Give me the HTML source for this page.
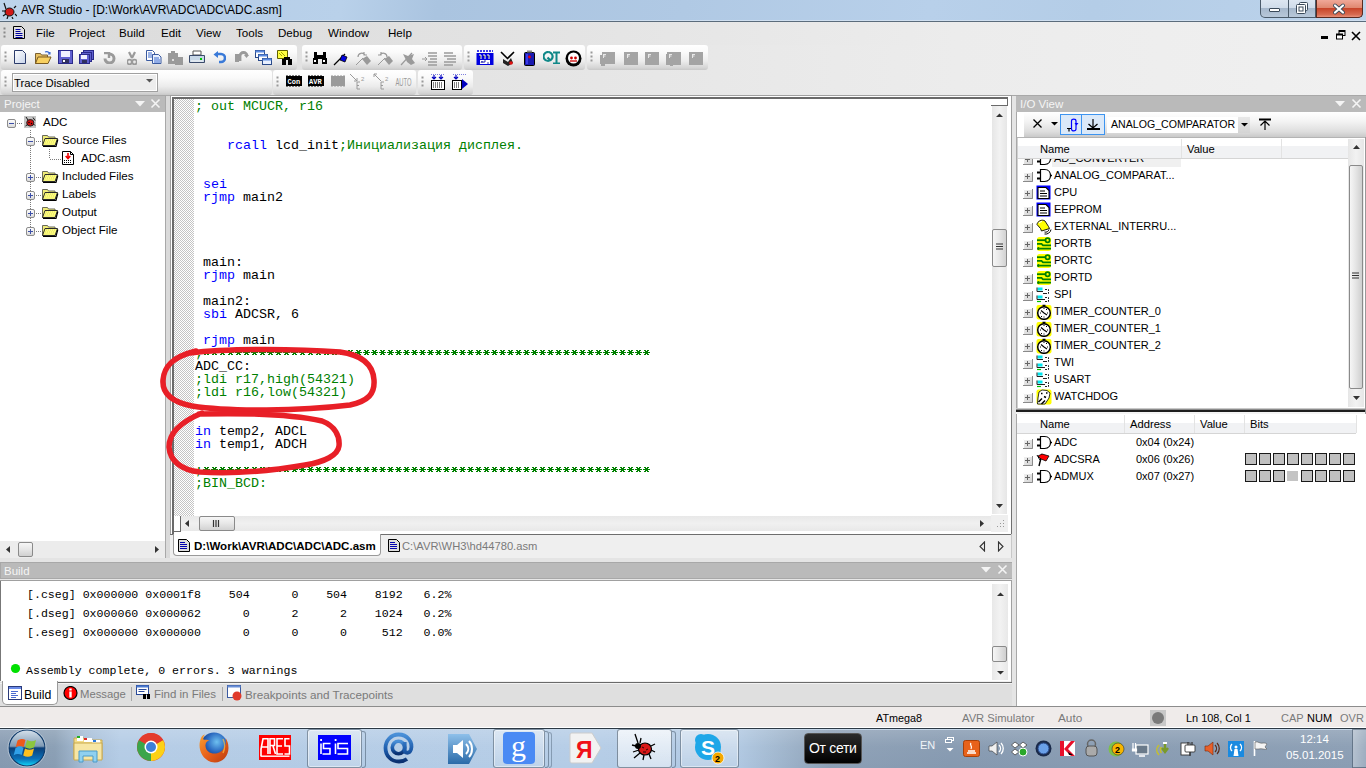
<!DOCTYPE html>
<html><head><meta charset="utf-8"><style>
*{margin:0;padding:0;box-sizing:border-box}
html,body{width:1366px;height:768px;overflow:hidden;background:#e5e5e5;font-family:"Liberation Sans",sans-serif;font-size:12px;color:#000;position:relative}
.a{position:absolute}
.t{position:absolute;white-space:pre;line-height:1}
.code{font-family:"Liberation Mono",monospace;font-size:13.33px;line-height:13px;white-space:pre;position:absolute}
.k{color:#0000ff}.c{color:#008000}
.mono{font-family:"Liberation Mono",monospace}
</style></head><body>
<div class="a" style="left:0px;top:0px;width:1366px;height:21px;background:linear-gradient(100deg,#bdd4eb 0%,#b6cee8 15%,#b9d1ea 25%,#aac4e0 32%,#b0c9e4 50%,#b8d0ea 68%,#b4cde7 80%,#bcd3eb 100%)"></div>
<div class="a" style="left:0px;top:20px;width:1366px;height:1px;background:#cfdff0"></div>
<div class="a" style="left:0px;top:21px;width:1366px;height:1px;background:#5b6c7c"></div>
<div class="t " style="left:21px;top:4px;font-size:12px;color:#000;">AVR Studio - [D:\Work\AVR\ADC\ADC\ADC.asm]</div>
<svg class="a" style="left:1px;top:2px;" width="16" height="17" viewBox="0 0 16 17"><ellipse cx="8.5" cy="10" rx="4.5" ry="4" fill="#d01818" stroke="#111" stroke-width="1"/><path d="M5 7L3 1M1 9h4M2 14l3-2M6 17l1-3M13 6l2-2M14 12l2 2M11 15l1 2" stroke="#111" stroke-width="1.2"/></svg>
<div class="a" style="left:1260px;top:0px;width:103px;height:18px;border:1px solid #4a5a6a;border-top:none;border-radius:0 0 5px 5px;overflow:hidden;background:linear-gradient(#dce6f1 0%,#d0dcea 45%,#a6b8cc 50%,#b8c8da 100%)"></div>
<div class="a" style="left:1316px;top:0px;width:47px;height:18px;background:linear-gradient(#f0a898 0%,#e08870 45%,#c8452a 50%,#d66a50 85%,#e8907a 100%);border:1px solid #5a2a20;border-top:none;border-radius:0 0 5px 0"></div>
<div class="a" style="left:1288px;top:0px;width:1px;height:17px;background:#4a5a6a"></div>
<div class="a" style="left:1315px;top:0px;width:1px;height:17px;background:#4a5a6a"></div>
<div class="a" style="left:1269px;top:8px;width:11px;height:4px;background:#fff;border:1px solid #3a4a5a;border-radius:1px"></div>
<svg class="a" style="left:1295px;top:1px;" width="14" height="14" viewBox="0 0 14 14"><rect x="4.5" y="1.5" width="8" height="8" rx="1" fill="#fff" stroke="#3a4a5a"/><rect x="1.5" y="3.5" width="9" height="9" rx="1" fill="#fff" stroke="#3a4a5a"/><rect x="4" y="6" width="4" height="4" fill="none" stroke="#3a4a5a"/></svg>
<svg class="a" style="left:1331px;top:2px;" width="16" height="13" viewBox="0 0 16 13"><path d="M4 3.5L12 10.5M12 3.5L4 10.5" stroke="#3a4a5a" stroke-width="3.8" stroke-linecap="round"/><path d="M4 3.5L12 10.5M12 3.5L4 10.5" stroke="#fff" stroke-width="2.2" stroke-linecap="round"/></svg>
<div class="a" style="left:0px;top:22px;width:1366px;height:23px;background:linear-gradient(90deg,#dbdbdb 0%,#e2e2e2 35%,#ececec 70%,#f0f0f0 100%)"></div>
<svg class="a" style="left:3px;top:27px;" width="3" height="12" viewBox="0 0 3 12"><rect x="0.5" y="0.5" width="2" height="2" fill="#888"/><rect x="0.5" y="4.5" width="2" height="2" fill="#888"/><rect x="0.5" y="8.5" width="2" height="2" fill="#888"/></svg>
<svg class="a" style="left:13px;top:26px;" width="12" height="13" viewBox="0 0 12 13"><path d="M0.5 0.5h8l3 3v9H0.5Z" fill="#e0e0e0" stroke="#000" stroke-width="1"/><path d="M2.5 3.5h5M2.5 5.5h5M2.5 7.5h7M2.5 9.5h7M2.5 11.5h7" stroke="#0000a0" stroke-width="1"/></svg>
<div class="t " style="left:36px;top:27px;font-size:11.6px;color:#000;">File</div>
<div class="t " style="left:69px;top:27px;font-size:11.6px;color:#000;">Project</div>
<div class="t " style="left:119px;top:27px;font-size:11.6px;color:#000;">Build</div>
<div class="t " style="left:161px;top:27px;font-size:11.6px;color:#000;">Edit</div>
<div class="t " style="left:196px;top:27px;font-size:11.6px;color:#000;">View</div>
<div class="t " style="left:236px;top:27px;font-size:11.6px;color:#000;">Tools</div>
<div class="t " style="left:278px;top:27px;font-size:11.6px;color:#000;">Debug</div>
<div class="t " style="left:328px;top:27px;font-size:11.6px;color:#000;">Window</div>
<div class="t " style="left:388px;top:27px;font-size:11.6px;color:#000;">Help</div>
<div class="a" style="left:1321px;top:36px;width:7px;height:3px;background:#000"></div>
<svg class="a" style="left:1336px;top:30px;" width="10" height="10" viewBox="0 0 10 10"><rect x="3" y="0.5" width="6" height="5" fill="none" stroke="#000"/><rect x="3" y="0.5" width="6" height="1.5" fill="#000"/><rect x="0.5" y="4" width="6" height="5" fill="#fff" stroke="#000"/><rect x="0.5" y="4" width="6" height="1.5" fill="#000"/></svg>
<svg class="a" style="left:1351px;top:31px;" width="10" height="10" viewBox="0 0 10 10"><path d="M1 1L9 9M9 1L1 9" stroke="#000" stroke-width="1.6"/></svg>
<div class="a" style="left:0px;top:45px;width:1366px;height:51px;background:linear-gradient(90deg,#dedede 0%,#e4e4e4 35%,#ececec 70%,#f0f0f0 100%)"></div>
<div class="a" style="left:0px;top:95px;width:1366px;height:1px;background:#a8a8a8"></div>
<div class="a" style="left:1px;top:45px;width:296px;height:25px;background:linear-gradient(#ffffff 0%,#fafafa 30%,#ececec 65%,#d6d6d6 90%,#c8c8c8 100%);border-radius:3px"></div>
<svg class="a" style="left:4px;top:51px;" width="3" height="12" viewBox="0 0 3 12"><rect x="0.5" y="0.5" width="2" height="2" fill="#999"/><rect x="0.5" y="4.5" width="2" height="2" fill="#999"/><rect x="0.5" y="8.5" width="2" height="2" fill="#999"/></svg>
<div class="a" style="left:302px;top:45px;width:160px;height:25px;background:linear-gradient(#ffffff 0%,#fafafa 30%,#ececec 65%,#d6d6d6 90%,#c8c8c8 100%);border-radius:3px"></div>
<svg class="a" style="left:305px;top:51px;" width="3" height="12" viewBox="0 0 3 12"><rect x="0.5" y="0.5" width="2" height="2" fill="#999"/><rect x="0.5" y="4.5" width="2" height="2" fill="#999"/><rect x="0.5" y="8.5" width="2" height="2" fill="#999"/></svg>
<div class="a" style="left:464px;top:45px;width:121px;height:25px;background:linear-gradient(#ffffff 0%,#fafafa 30%,#ececec 65%,#d6d6d6 90%,#c8c8c8 100%);border-radius:3px"></div>
<svg class="a" style="left:467px;top:51px;" width="3" height="12" viewBox="0 0 3 12"><rect x="0.5" y="0.5" width="2" height="2" fill="#999"/><rect x="0.5" y="4.5" width="2" height="2" fill="#999"/><rect x="0.5" y="8.5" width="2" height="2" fill="#999"/></svg>
<div class="a" style="left:587px;top:45px;width:121px;height:25px;background:linear-gradient(#ffffff 0%,#fafafa 30%,#ececec 65%,#d6d6d6 90%,#c8c8c8 100%);border-radius:3px"></div>
<svg class="a" style="left:590px;top:51px;" width="3" height="12" viewBox="0 0 3 12"><rect x="0.5" y="0.5" width="2" height="2" fill="#999"/><rect x="0.5" y="4.5" width="2" height="2" fill="#999"/><rect x="0.5" y="8.5" width="2" height="2" fill="#999"/></svg>
<div class="a" style="left:1px;top:70px;width:271px;height:25px;background:linear-gradient(#ffffff 0%,#fafafa 30%,#ececec 65%,#d6d6d6 90%,#c8c8c8 100%);border-radius:3px"></div>
<svg class="a" style="left:4px;top:76px;" width="3" height="12" viewBox="0 0 3 12"><rect x="0.5" y="0.5" width="2" height="2" fill="#999"/><rect x="0.5" y="4.5" width="2" height="2" fill="#999"/><rect x="0.5" y="8.5" width="2" height="2" fill="#999"/></svg>
<div class="a" style="left:273px;top:70px;width:143px;height:25px;background:linear-gradient(#ffffff 0%,#fafafa 30%,#ececec 65%,#d6d6d6 90%,#c8c8c8 100%);border-radius:3px"></div>
<svg class="a" style="left:276px;top:76px;" width="3" height="12" viewBox="0 0 3 12"><rect x="0.5" y="0.5" width="2" height="2" fill="#999"/><rect x="0.5" y="4.5" width="2" height="2" fill="#999"/><rect x="0.5" y="8.5" width="2" height="2" fill="#999"/></svg>
<div class="a" style="left:418px;top:70px;width:55px;height:25px;background:linear-gradient(#ffffff 0%,#fafafa 30%,#ececec 65%,#d6d6d6 90%,#c8c8c8 100%);border-radius:3px"></div>
<svg class="a" style="left:421px;top:76px;" width="3" height="12" viewBox="0 0 3 12"><rect x="0.5" y="0.5" width="2" height="2" fill="#999"/><rect x="0.5" y="4.5" width="2" height="2" fill="#999"/><rect x="0.5" y="8.5" width="2" height="2" fill="#999"/></svg>
<svg class="a" style="left:14px;top:50px;" width="12" height="14" viewBox="0 0 12 14"><path d="M0.5 0.5h8l3 3v10H0.5Z" fill="url(#pg)" stroke="#2a3a6a"/><defs><linearGradient id="pg" x1="0" y1="0" x2="1" y2="1"><stop offset="0" stop-color="#fff"/><stop offset="1" stop-color="#c8d4ea"/></linearGradient></defs></svg>
<svg class="a" style="left:35px;top:51px;" width="17" height="13" viewBox="0 0 17 13"><path d="M0.5 2.5h5l1 1.5h6v8.5H0.5Z" fill="#e8c060" stroke="#7a6030"/><path d="M0.5 12.5L3 6h13l-3 6.5Z" fill="#f8d060" stroke="#7a5a20"/><path d="M10 1c2-1 4 0 5 2M13 3h2V1" fill="none" stroke="#3a6ad0" stroke-width="1.1"/></svg>
<svg class="a" style="left:58px;top:50px;" width="15" height="14" viewBox="0 0 15 14"><rect x="0.5" y="0.5" width="14" height="13" fill="#6060d0" stroke="#2a2a8a"/><rect x="3" y="1" width="9" height="6" fill="#f0f0ff"/><rect x="4" y="9" width="7" height="4" fill="#303060"/><rect x="5" y="10" width="2" height="2" fill="#fff"/></svg>
<svg class="a" style="left:79px;top:50px;" width="15" height="14" viewBox="0 0 15 14"><rect x="4.5" y="0.5" width="10" height="9" fill="#6060d0" stroke="#2a2a8a"/><rect x="2.5" y="2.5" width="10" height="9" fill="#6060d0" stroke="#2a2a8a"/><rect x="0.5" y="4.5" width="10" height="9" fill="#6060d0" stroke="#2a2a8a"/><rect x="2" y="5" width="6" height="4" fill="#f0f0ff"/><rect x="3" y="10" width="5" height="3" fill="#303060"/></svg>
<svg class="a" style="left:103px;top:52px;" width="13" height="12" viewBox="0 0 13 12"><path d="M6.5 2A4.5 4.5 0 1 1 2 6.5" fill="none" stroke="#9a9a9a" stroke-width="3"/><path d="M1 1h5v5" fill="none" stroke="#9a9a9a" stroke-width="2.4"/></svg>
<svg class="a" style="left:127px;top:51px;" width="10" height="14" viewBox="0 0 10 14"><path d="M2 1l3 6M8 1L5 7" stroke="#9a9a9a" stroke-width="2.2"/><circle cx="2.5" cy="11" r="2.3" fill="none" stroke="#9a9a9a" stroke-width="1.8"/><circle cx="7.5" cy="11" r="2.3" fill="none" stroke="#9a9a9a" stroke-width="1.8"/></svg>
<svg class="a" style="left:146px;top:50px;" width="16" height="14" viewBox="0 0 16 14"><path d="M0.5 0.5h6l2 2v8H0.5Z" fill="#fff" stroke="#3a5aa0"/><path d="M2 3h4M2 5h5M2 7h5" stroke="#3a6ad0"/><path d="M6.5 4.5h6l2.5 2.5v6.5H6.5Z" fill="#e8f0ff" stroke="#3a5aa0"/><path d="M8 8h5M8 10h6M8 12h6" stroke="#3a6ad0"/></svg>
<svg class="a" style="left:167px;top:51px;" width="17" height="14" viewBox="0 0 17 14"><rect x="1" y="2" width="10" height="11" fill="#9a9a9a"/><rect x="8" y="6" width="8" height="8" fill="#9a9a9a"/><rect x="4" y="0" width="4" height="3" fill="#9a9a9a"/><rect x="5" y="8" width="2" height="2" fill="#ddd"/></svg>
<svg class="a" style="left:189px;top:50px;" width="16" height="14" viewBox="0 0 16 14"><path d="M4 1h8v4H4Z" fill="#fff" stroke="#555"/><path d="M0.5 5.5h15v7h-15Z" fill="#c8d8e8" stroke="#3a4a6a"/><rect x="2" y="10" width="12" height="2" fill="#e0e8f0"/><rect x="11" y="8" width="2" height="2" fill="#0c0"/></svg>
<svg class="a" style="left:213px;top:51px;" width="13" height="13" viewBox="0 0 13 13"><path d="M4 3h4a4 4 0 0 1 0 8H6" fill="none" stroke="#3a7ad8" stroke-width="2.6"/><path d="M5 0L0.5 3.5L5 7Z" fill="#3a7ad8"/></svg>
<svg class="a" style="left:234px;top:51px;" width="16" height="12" viewBox="0 0 16 12"><path d="M6 10V5a3.5 3.5 0 0 1 7 0" fill="none" stroke="#9a9a9a" stroke-width="2.8"/><path d="M10 4h5l-2.5 3Z" fill="#9a9a9a"/><rect x="1" y="3" width="4" height="8" fill="#9a9a9a"/></svg>
<svg class="a" style="left:255px;top:50px;" width="17" height="15" viewBox="0 0 17 15"><rect x="0.5" y="0.5" width="9" height="7" fill="#fff" stroke="#2a4a8a"/><rect x="0.5" y="0.5" width="9" height="2" fill="#5a8ae0"/><rect x="3.5" y="4.5" width="9" height="6" fill="#fff" stroke="#2a4a8a"/><rect x="3.5" y="4.5" width="9" height="2" fill="#5a8ae0"/><rect x="7.5" y="8.5" width="9" height="6" fill="#e8f0ff" stroke="#2a4a8a"/><rect x="7.5" y="8.5" width="9" height="2" fill="#5a8ae0"/></svg>
<svg class="a" style="left:277px;top:50px;" width="17" height="15" viewBox="0 0 17 15"><path d="M0.5 0.5h10v8h-10Z" fill="#ffff40" stroke="#606000"/><path d="M2 3l3 3M4 2l4 4" stroke="#a0a000"/><path d="M5 9h4v6H5ZM11 9h4v6h-4Z" fill="#000"/><rect x="7" y="7" width="6" height="3" fill="#000"/></svg>
<svg class="a" style="left:312px;top:50px;" width="16" height="14" viewBox="0 0 16 14"><path d="M1 8h5v6H1ZM10 8h5v6h-5Z" fill="#000"/><path d="M2 2h3v7H2ZM11 2h3v7h-3Z" fill="#000"/><rect x="5" y="5" width="6" height="4" fill="#000"/><rect x="2" y="10" width="2" height="2" fill="#fff"/><rect x="11" y="10" width="2" height="2" fill="#fff"/></svg>
<svg class="a" style="left:333px;top:52px;" width="17" height="14" viewBox="0 0 17 14"><path d="M1 13L12 2" stroke="#000" stroke-width="1.2"/><path d="M9 3l5 2-2 5-5-2Z" fill="#0000e0" stroke="#000" stroke-width="0.8"/></svg>
<svg class="a" style="left:355px;top:51px;" width="17" height="15" viewBox="0 0 17 15"><path d="M3 6C3 2 8 1 10 4M9 1v3h3" fill="none" stroke="#9a9a9a" stroke-width="1.2"/><path d="M1 14L8 7" stroke="#9a9a9a"/><path d="M7 8l5-3 4 5-4 4Z" fill="#9a9a9a"/></svg>
<svg class="a" style="left:377px;top:51px;" width="17" height="15" viewBox="0 0 17 15"><path d="M10 6C10 2 5 1 3 4M4 1v3H1" fill="none" stroke="#9a9a9a" stroke-width="1.2"/><path d="M1 14L8 7" stroke="#9a9a9a"/><path d="M7 8l5-3 4 5-4 4Z" fill="#9a9a9a"/></svg>
<svg class="a" style="left:400px;top:51px;" width="16" height="15" viewBox="0 0 16 15"><path d="M1 14L12 2" stroke="#9a9a9a" stroke-width="1.2"/><path d="M3 3l5 2 6-2-2 5 3 4-4 2-4-3Z" fill="#9a9a9a"/></svg>
<svg class="a" style="left:422px;top:51px;" width="15" height="15" viewBox="0 0 15 15"><path d="M6 2h9M6 5h9M8 8h7M6 11h9M6 14h9" stroke="#9a9a9a" stroke-width="1.4"/><path d="M0 8h5M3 6l2 2-2 2" fill="none" stroke="#9a9a9a"/></svg>
<svg class="a" style="left:444px;top:51px;" width="15" height="15" viewBox="0 0 15 15"><path d="M0 2h9M0 5h12M3 8h9M0 11h12M0 14h9" stroke="#9a9a9a" stroke-width="1.4"/></svg>
<svg class="a" style="left:476px;top:50px;" width="18" height="16" viewBox="0 0 18 16"><rect x="0.5" y="3" width="17" height="12" fill="#0000e0"/><path d="M1 1h16" stroke="#0000e0" stroke-dasharray="2 1" stroke-width="1.5"/><path d="M3 5h2v4M7 5h2v4M11 5h2v4" stroke="#fff"/><rect x="4" y="10" width="10" height="4" fill="#fff"/><path d="M5 13l1-2 1 2M8 13v-2h2M11 13h2" stroke="#0000a0" stroke-width="0.8" fill="none"/></svg>
<svg class="a" style="left:500px;top:50px;" width="15" height="16" viewBox="0 0 15 16"><path d="M1 2L8 9M14 2L7 9" stroke="#000" stroke-width="1.6"/><path d="M3 9l5 3 3-4 2 5-5 3-5-3Z" fill="#222"/><circle cx="11" cy="13" r="1.8" fill="#e01010"/></svg>
<svg class="a" style="left:524px;top:50px;" width="11" height="16" viewBox="0 0 11 16"><rect x="0.5" y="2.5" width="10" height="13" rx="1" fill="#1a1ab0" stroke="#000"/><rect x="3" y="0.5" width="5" height="2" fill="#888"/><circle cx="5.5" cy="7" r="1.4" fill="#e00"/><rect x="2" y="4" width="2" height="10" fill="#3a3ae8"/></svg>
<svg class="a" style="left:543px;top:51px;" width="18" height="13" viewBox="0 0 18 13"><path d="M5 1a4.5 4.5 0 1 0 0.1 0M4.5 6.5l3 3" fill="none" stroke="#108888" stroke-width="2.2"/><path d="M10 1.5h7M13.5 1.5v11M10 12.5h7" stroke="#108888" stroke-width="2"/></svg>
<svg class="a" style="left:565px;top:50px;" width="17" height="17" viewBox="0 0 17 17"><circle cx="8.5" cy="8.5" r="8" fill="#000"/><circle cx="8.5" cy="8" r="5.5" fill="#fff"/><circle cx="6.5" cy="8" r="1.4" fill="#c00"/><circle cx="10.5" cy="8" r="1.4" fill="#c00"/><path d="M5 11h7" stroke="#c00" stroke-width="1.3"/></svg>
<svg class="a" style="left:599px;top:51px;" width="17" height="16" viewBox="0 0 17 16"><path d="M3 1h13v12H6v2H2v-2H1V4h2Z" fill="#a4a4a4"/><path d="M4.5 3v4M4.5 3.5h2.5M4.5 5h2" stroke="#e8e8e8" stroke-width="1"/></svg>
<svg class="a" style="left:623px;top:51px;" width="17" height="16" viewBox="0 0 17 16"><path d="M1 1h14v13H1Z" fill="#a4a4a4"/><path d="M4.5 3v4M4.5 3.5h2.5M4.5 5h2" stroke="#e8e8e8" stroke-width="1"/></svg>
<svg class="a" style="left:644px;top:51px;" width="17" height="16" viewBox="0 0 17 16"><path d="M1 1h14v13H1Z" fill="#a4a4a4"/><path d="M4.5 3v4M4.5 3.5h2.5M4.5 5h2" stroke="#e8e8e8" stroke-width="1"/></svg>
<svg class="a" style="left:665px;top:51px;" width="17" height="16" viewBox="0 0 17 16"><path d="M2 1h14v13H8v1H5v-1H1V3h1Z" fill="#a4a4a4"/><path d="M4.5 3v4M4.5 3.5h2.5M4.5 5h2" stroke="#e8e8e8" stroke-width="1"/></svg>
<svg class="a" style="left:688px;top:51px;" width="17" height="16" viewBox="0 0 17 16"><path d="M1 1h14v13H1Z" fill="#a4a4a4"/><path d="M4.5 3v4M4.5 3.5h2.5M4.5 5h2" stroke="#e8e8e8" stroke-width="1"/></svg>
<div class="a" style="left:12px;top:73px;width:146px;height:19px;background:#ededed;border:1px solid #a0a0a0;box-shadow:inset 0 0 0 1px #fff"></div>
<div class="t " style="left:14px;top:78px;font-size:11.3px;color:#000;">Trace Disabled</div>
<svg class="a" style="left:146px;top:79px;" width="7" height="4" viewBox="0 0 7 4"><path d="M0 0H7L3.5 3.5Z" fill="#555"/></svg>
<svg class="a" style="left:286px;top:74px;" width="16" height="14" viewBox="0 0 16 14"><rect x="0" y="2" width="16" height="10" fill="#000"/><path d="M1 1v1M4 1v1M7 1v1M10 1v1M13 1v1M1 12v1M4 12v1M7 12v1M10 12v1M13 12v1" stroke="#000"/><text x="1.5" y="10" font-family="Liberation Mono" font-weight="bold" font-size="7" fill="#fff">Con</text></svg>
<svg class="a" style="left:308px;top:74px;" width="16" height="14" viewBox="0 0 16 14"><rect x="0" y="2" width="16" height="10" fill="#000"/><path d="M1 1v1M4 1v1M7 1v1M10 1v1M13 1v1M1 12v1M4 12v1M7 12v1M10 12v1M13 12v1" stroke="#000"/><text x="1" y="10" font-family="Liberation Mono" font-weight="bold" font-size="7" fill="#fff">AVR</text></svg>
<svg class="a" style="left:330px;top:74px;" width="16" height="14" viewBox="0 0 16 14"><rect x="1" y="2" width="14" height="10" fill="#9a9a9a"/><path d="M2 1v1M5 1v1M8 1v1M11 1v1M14 1v1M2 12v1M5 12v1M8 12v1M11 12v1M14 12v1" stroke="#9a9a9a"/></svg>
<svg class="a" style="left:349px;top:73px;" width="19" height="17" viewBox="0 0 19 17"><path d="M1 1l7 7M8 8v-3M8 8h-3" fill="none" stroke="#9a9a9a"/><path d="M11 9h-3v7h3M8 12.5h2" fill="none" stroke="#9a9a9a"/><text x="12" y="8" font-size="6" fill="#9a9a9a" font-family="Liberation Sans">2</text></svg>
<svg class="a" style="left:373px;top:73px;" width="19" height="17" viewBox="0 0 19 17"><path d="M8 8L1 1M1 1v3M1 1h3" fill="none" stroke="#9a9a9a"/><path d="M11 9h-3v7h3M8 12.5h2" fill="none" stroke="#9a9a9a"/><text x="12" y="8" font-size="6" fill="#9a9a9a" font-family="Liberation Sans">2</text></svg>
<svg class="a" style="left:430px;top:74px;" width="16" height="16" viewBox="0 0 16 16"><rect x="1.5" y="6.5" width="13" height="9" fill="#fff" stroke="#000"/><path d="M3 9h10M3 11h10M3 13h10" stroke="#000" stroke-dasharray="1 1"/><path d="M4 1v4M2 3l2 2 2-2M11 1v4M9 3l2 2 2-2" fill="none" stroke="#0000c0" stroke-width="1.2"/><path d="M1 0h14" stroke="#0000c0" stroke-dasharray="1 1"/></svg>
<svg class="a" style="left:452px;top:74px;" width="17" height="16" viewBox="0 0 17 16"><rect x="0.5" y="6.5" width="9" height="9" fill="#fff" stroke="#000"/><path d="M2 9h6M2 11h6M2 13h6" stroke="#000" stroke-dasharray="1 1"/><path d="M4 1v4M2 3l2 2 2-2" fill="none" stroke="#0000c0" stroke-width="1.2"/><path d="M10 5l6 5-6 5Z" fill="#0000c0"/><path d="M1 0h14" stroke="#0000c0" stroke-dasharray="1 1"/></svg>
<svg class="a" style="left:395px;top:76px;" width="17" height="11" viewBox="0 0 17 11"><text x="0.5" y="9.5" font-family="Liberation Sans" font-size="10.5" textLength="16" lengthAdjust="spacingAndGlyphs" fill="#9a9a9a">AUTO</text></svg>
<div class="a" style="left:0px;top:96px;width:166px;height:462px;background:#fff"></div>
<div class="a" style="left:0px;top:96px;width:166px;height:16px;background:#bababa"></div>
<div class="t " style="left:4px;top:99px;font-size:11.5px;color:#f5f5f5;">Project</div>
<svg class="a" style="left:135px;top:101px;" width="10" height="6" viewBox="0 0 10 6"><path d="M0 0H10L5 5.5Z" fill="#f4f4f4"/></svg>
<svg class="a" style="left:150px;top:98px;" width="11" height="11" viewBox="0 0 11 11"><path d="M1.5 1.5L9.5 9.5M9.5 1.5L1.5 9.5" stroke="#f4f4f4" stroke-width="1.6"/></svg>
<svg class="a" style="left:7px;top:119px;" width="9" height="9" viewBox="0 0 9 9"><defs><linearGradient id="pmg" x1="0" y1="0" x2="0" y2="1"><stop offset="0" stop-color="#fff"/><stop offset="1" stop-color="#d8d8d8"/></linearGradient></defs><rect x="0.5" y="0.5" width="8" height="8" rx="1.5" fill="url(#pmg)" stroke="#8c8c8c"/><path d="M2 4.5h5" stroke="#3c4fa8" stroke-width="1"/></svg>
<div class="a" style="left:17px;top:123px;width:6px;height:1px;background:repeating-linear-gradient(90deg,#7a7a7a 0 1px,transparent 1px 2px)"></div>
<svg class="a" style="left:24px;top:116px;" width="12" height="12" viewBox="0 0 12 12"><rect width="12" height="12" fill="#c4c4c4"/><ellipse cx="6.3" cy="6.8" rx="3.6" ry="3.3" fill="#d01010" stroke="#222" stroke-width="1"/><path d="M2 1L4 4M9 1.5L11 4.5M1.5 10L3.5 8.5M11 9.5L9.5 8" stroke="#111" stroke-width="1"/><circle cx="5" cy="6.5" r="0.7" fill="#000"/><circle cx="7.5" cy="7.5" r="0.7" fill="#000"/></svg>
<div class="t " style="left:43px;top:116px;font-size:11.6px;color:#000;">ADC</div>
<div class="a" style="left:30px;top:130px;width:1px;height:102px;background:repeating-linear-gradient(#7a7a7a 0 1px,transparent 1px 2px)"></div>
<svg class="a" style="left:26px;top:137px;" width="9" height="9" viewBox="0 0 9 9"><defs><linearGradient id="pmg" x1="0" y1="0" x2="0" y2="1"><stop offset="0" stop-color="#fff"/><stop offset="1" stop-color="#d8d8d8"/></linearGradient></defs><rect x="0.5" y="0.5" width="8" height="8" rx="1.5" fill="url(#pmg)" stroke="#8c8c8c"/><path d="M2 4.5h5" stroke="#3c4fa8" stroke-width="1"/></svg>
<div class="a" style="left:36px;top:141px;width:5px;height:1px;background:repeating-linear-gradient(90deg,#7a7a7a 0 1px,transparent 1px 2px)"></div>
<svg class="a" style="left:41px;top:133px;" width="18" height="15" viewBox="0 0 18 15"><path d="M1.5 2.5h5l1 1.5h6.5v8.5H1.5Z" fill="#f0ec78" stroke="#6b6b5a"/><path d="M1.5 12.5L4 5.5H16.5L14 12.5Z" fill="#ffff7a" stroke="#2a2a2a"/><path d="M2 13.5H15L16.8 6.5" fill="none" stroke="#000" stroke-width="1.2"/><path d="M5 7h9M4 9h9M3.5 11h9" stroke="#d8d470" stroke-width="1" stroke-dasharray="1 1"/></svg>
<div class="t " style="left:62px;top:134px;font-size:11.6px;color:#000;">Source Files</div>
<svg class="a" style="left:26px;top:173px;" width="9" height="9" viewBox="0 0 9 9"><defs><linearGradient id="pmg" x1="0" y1="0" x2="0" y2="1"><stop offset="0" stop-color="#fff"/><stop offset="1" stop-color="#d8d8d8"/></linearGradient></defs><rect x="0.5" y="0.5" width="8" height="8" rx="1.5" fill="url(#pmg)" stroke="#8c8c8c"/><path d="M2 4.5h5" stroke="#3c4fa8" stroke-width="1"/><path d="M4.5 2v5" stroke="#3c4fa8" stroke-width="1"/></svg>
<div class="a" style="left:36px;top:177px;width:5px;height:1px;background:repeating-linear-gradient(90deg,#7a7a7a 0 1px,transparent 1px 2px)"></div>
<svg class="a" style="left:41px;top:169px;" width="18" height="15" viewBox="0 0 18 15"><path d="M1.5 2.5h5l1 1.5h6.5v8.5H1.5Z" fill="#f0ec78" stroke="#6b6b5a"/><path d="M1.5 12.5L4 5.5H16.5L14 12.5Z" fill="#ffff7a" stroke="#2a2a2a"/><path d="M2 13.5H15L16.8 6.5" fill="none" stroke="#000" stroke-width="1.2"/><path d="M5 7h9M4 9h9M3.5 11h9" stroke="#d8d470" stroke-width="1" stroke-dasharray="1 1"/></svg>
<div class="t " style="left:62px;top:170px;font-size:11.6px;color:#000;">Included Files</div>
<svg class="a" style="left:26px;top:191px;" width="9" height="9" viewBox="0 0 9 9"><defs><linearGradient id="pmg" x1="0" y1="0" x2="0" y2="1"><stop offset="0" stop-color="#fff"/><stop offset="1" stop-color="#d8d8d8"/></linearGradient></defs><rect x="0.5" y="0.5" width="8" height="8" rx="1.5" fill="url(#pmg)" stroke="#8c8c8c"/><path d="M2 4.5h5" stroke="#3c4fa8" stroke-width="1"/><path d="M4.5 2v5" stroke="#3c4fa8" stroke-width="1"/></svg>
<div class="a" style="left:36px;top:195px;width:5px;height:1px;background:repeating-linear-gradient(90deg,#7a7a7a 0 1px,transparent 1px 2px)"></div>
<svg class="a" style="left:41px;top:187px;" width="18" height="15" viewBox="0 0 18 15"><path d="M1.5 2.5h5l1 1.5h6.5v8.5H1.5Z" fill="#f0ec78" stroke="#6b6b5a"/><path d="M1.5 12.5L4 5.5H16.5L14 12.5Z" fill="#ffff7a" stroke="#2a2a2a"/><path d="M2 13.5H15L16.8 6.5" fill="none" stroke="#000" stroke-width="1.2"/><path d="M5 7h9M4 9h9M3.5 11h9" stroke="#d8d470" stroke-width="1" stroke-dasharray="1 1"/></svg>
<div class="t " style="left:62px;top:188px;font-size:11.6px;color:#000;">Labels</div>
<svg class="a" style="left:26px;top:209px;" width="9" height="9" viewBox="0 0 9 9"><defs><linearGradient id="pmg" x1="0" y1="0" x2="0" y2="1"><stop offset="0" stop-color="#fff"/><stop offset="1" stop-color="#d8d8d8"/></linearGradient></defs><rect x="0.5" y="0.5" width="8" height="8" rx="1.5" fill="url(#pmg)" stroke="#8c8c8c"/><path d="M2 4.5h5" stroke="#3c4fa8" stroke-width="1"/><path d="M4.5 2v5" stroke="#3c4fa8" stroke-width="1"/></svg>
<div class="a" style="left:36px;top:213px;width:5px;height:1px;background:repeating-linear-gradient(90deg,#7a7a7a 0 1px,transparent 1px 2px)"></div>
<svg class="a" style="left:41px;top:205px;" width="18" height="15" viewBox="0 0 18 15"><path d="M1.5 2.5h5l1 1.5h6.5v8.5H1.5Z" fill="#f0ec78" stroke="#6b6b5a"/><path d="M1.5 12.5L4 5.5H16.5L14 12.5Z" fill="#ffff7a" stroke="#2a2a2a"/><path d="M2 13.5H15L16.8 6.5" fill="none" stroke="#000" stroke-width="1.2"/><path d="M5 7h9M4 9h9M3.5 11h9" stroke="#d8d470" stroke-width="1" stroke-dasharray="1 1"/></svg>
<div class="t " style="left:62px;top:206px;font-size:11.6px;color:#000;">Output</div>
<svg class="a" style="left:26px;top:227px;" width="9" height="9" viewBox="0 0 9 9"><defs><linearGradient id="pmg" x1="0" y1="0" x2="0" y2="1"><stop offset="0" stop-color="#fff"/><stop offset="1" stop-color="#d8d8d8"/></linearGradient></defs><rect x="0.5" y="0.5" width="8" height="8" rx="1.5" fill="url(#pmg)" stroke="#8c8c8c"/><path d="M2 4.5h5" stroke="#3c4fa8" stroke-width="1"/><path d="M4.5 2v5" stroke="#3c4fa8" stroke-width="1"/></svg>
<div class="a" style="left:36px;top:231px;width:5px;height:1px;background:repeating-linear-gradient(90deg,#7a7a7a 0 1px,transparent 1px 2px)"></div>
<svg class="a" style="left:41px;top:223px;" width="18" height="15" viewBox="0 0 18 15"><path d="M1.5 2.5h5l1 1.5h6.5v8.5H1.5Z" fill="#f0ec78" stroke="#6b6b5a"/><path d="M1.5 12.5L4 5.5H16.5L14 12.5Z" fill="#ffff7a" stroke="#2a2a2a"/><path d="M2 13.5H15L16.8 6.5" fill="none" stroke="#000" stroke-width="1.2"/><path d="M5 7h9M4 9h9M3.5 11h9" stroke="#d8d470" stroke-width="1" stroke-dasharray="1 1"/></svg>
<div class="t " style="left:62px;top:224px;font-size:11.6px;color:#000;">Object File</div>
<div class="a" style="left:49px;top:149px;width:1px;height:10px;background:repeating-linear-gradient(#7a7a7a 0 1px,transparent 1px 2px)"></div>
<div class="a" style="left:50px;top:159px;width:11px;height:1px;background:repeating-linear-gradient(90deg,#7a7a7a 0 1px,transparent 1px 2px)"></div>
<svg class="a" style="left:61px;top:151px;" width="14" height="14" viewBox="0 0 14 14"><path d="M1.5 0.5h8l3 3v10H1.5Z" fill="#fff" stroke="#000"/><path d="M9.5 0.5v3h3" fill="none" stroke="#000"/><path d="M7 2v5M4.7 5L7 7.5L9.3 5" stroke="#e00" stroke-width="1.6" fill="none"/><g fill="#000"><rect x="3" y="9" width="1" height="1"/><rect x="5" y="9" width="1" height="1"/><rect x="7" y="9" width="1" height="1"/><rect x="9" y="9" width="1" height="1"/><rect x="3" y="11" width="1" height="1"/><rect x="5" y="11" width="1" height="1"/><rect x="7" y="11" width="1" height="1"/><rect x="9" y="11" width="1" height="1"/></g></svg>
<div class="t " style="left:81px;top:152px;font-size:11.6px;color:#000;">ADC.asm</div>
<div class="a" style="left:0px;top:541px;width:166px;height:17px;background:#ececec"></div>
<svg class="a" style="left:5px;top:545px;" width="6" height="9" viewBox="0 0 6 9"><path d="M5 1L1 4.5L5 8Z" fill="#333"/></svg>
<svg class="a" style="left:154px;top:545px;" width="6" height="9" viewBox="0 0 6 9"><path d="M1 1L5 4.5L1 8Z" fill="#333"/></svg>
<div class="a" style="left:18px;top:542px;width:15px;height:15px;background:linear-gradient(#f6f6f6,#e6e6e6 50%,#d0d0d0);border:1px solid #8a8a8a;border-radius:2px"></div>
<div class="a" style="left:166px;top:96px;width:846px;height:466px;background:#ebebeb"></div>
<div class="a" style="left:166px;top:96px;width:4px;height:462px;background:#dadada"></div>
<div class="a" style="left:165px;top:96px;width:1px;height:462px;background:#a8a8a8"></div>
<div class="a" style="left:170px;top:95px;width:842px;height:440px;background:#fff"></div>
<div class="a" style="left:170px;top:95px;width:842px;height:1px;background:#a0a0a0"></div>
<div class="a" style="left:170px;top:95px;width:1px;height:440px;background:#a0a0a0"></div>
<div class="a" style="left:172px;top:97px;width:836px;height:2px;background:#6a6a6a"></div>
<div class="a" style="left:172px;top:97px;width:2px;height:437px;background:#6a6a6a"></div>
<div class="a" style="left:1011px;top:95px;width:1px;height:440px;background:linear-gradient(#a0a0a0,#6e6e6e)"></div>
<div class="a" style="left:170px;top:534px;width:842px;height:1px;background:#6e6e6e"></div>
<div class="a" style="left:174px;top:99px;width:20px;height:417px;background:repeating-conic-gradient(#c4c4c4 0 25%,#ffffff 0 50%) 0 0/2px 2px"></div>
<div class="code" style="left:195px;top:100px"><span class="c">; out MCUCR, r16</span>


    <span class="k">rcall</span> lcd_init<span class="c">;Инициализация дисплея.</span>


 <span class="k">sei</span>
 <span class="k">rjmp</span> main2




 main:
 <span class="k">rjmp</span> main

 main2:
 <span class="k">sbi</span> ADCSR, 6

 <span class="k">rjmp</span> main
<span class="c">;</span>
ADC_CC:
<span class="c">;ldi r17,high(54321)</span>
<span class="c">;ldi r16,low(54321)</span>


<span class="k">in</span> temp2, ADCL
<span class="k">in</span> temp1, ADCH

<span class="c">;</span>
<span class="c">;BIN_BCD:</span></div>
<svg class="a" style="left:203px;top:350px;shape-rendering:crispEdges" width="448" height="5" viewBox="0 0 448 5"><defs><pattern id="ast19" x="0" y="0" width="8" height="5" patternUnits="userSpaceOnUse"><g fill="#008000"><rect x="1" y="0" width="2" height="1"/><rect x="4" y="0" width="2" height="1"/><rect x="2" y="1" width="3" height="1"/><rect x="0" y="2" width="7" height="1"/><rect x="2" y="3" width="3" height="1"/><rect x="1" y="4" width="2" height="1"/><rect x="4" y="4" width="2" height="1"/></g></pattern></defs><rect x="0" y="0" width="448" height="5" fill="url(#ast19)"/></svg>
<svg class="a" style="left:203px;top:467px;shape-rendering:crispEdges" width="448" height="5" viewBox="0 0 448 5"><defs><pattern id="ast28" x="0" y="0" width="8" height="5" patternUnits="userSpaceOnUse"><g fill="#008000"><rect x="1" y="0" width="2" height="1"/><rect x="4" y="0" width="2" height="1"/><rect x="2" y="1" width="3" height="1"/><rect x="0" y="2" width="7" height="1"/><rect x="2" y="3" width="3" height="1"/><rect x="1" y="4" width="2" height="1"/><rect x="4" y="4" width="2" height="1"/></g></pattern></defs><rect x="0" y="0" width="448" height="5" fill="url(#ast28)"/></svg>
<svg class="a" style="left:0px;top:0px;pointer-events:none" width="1366" height="768" viewBox="0 0 1366 768"><g fill="none" stroke="#e81f27" stroke-width="5.5" stroke-linecap="round" stroke-linejoin="round"><path d="M190 353 C230 348,300 349,340 352 C362 355,373 364,374 380 C375 394,368 401,350 405 C300 411,230 412,192 406 C172 402,162 393,163 380 C164 367,172 357,196 351"/><path d="M199 414 C240 413,290 414,322 421 C335 426,340 436,339 446 C338 455,325 462,305 465 C270 471,230 474,200 472 C180 470,170 460,169 447 C169 435,178 423,202 413"/></g></svg>
<div class="a" style="left:991px;top:99px;width:17px;height:7px;background:#fff;border-bottom:1px solid #6a6a6a;border-right:1px solid #6a6a6a"></div>
<div class="a" style="left:992px;top:106px;width:15px;height:408px;background:linear-gradient(90deg,#e6e6e6,#f2f2f2 50%,#e6e6e6)"></div>
<svg class="a" style="left:995px;top:112px;" width="9" height="6" viewBox="0 0 9 6"><path d="M1 5 L4.5 1.5 L8 5 Z" fill="#333"/></svg>
<svg class="a" style="left:995px;top:503px;" width="9" height="6" viewBox="0 0 9 6"><path d="M1 1 L4.5 5 L8 1 Z" fill="#333"/></svg>
<div class="a" style="left:992px;top:229px;width:15px;height:38px;background:linear-gradient(90deg,#f6f6f6,#e9e9e9 45%,#d2d2d2 100%);border:1px solid #8a8a8a;border-radius:2px"></div>
<svg class="a" style="left:995px;top:243px;" width="9" height="8" viewBox="0 0 9 8"><path d="M1 1h7M1 3.5h7M1 6h7" stroke="#333" stroke-width="1.2"/></svg>
<div class="a" style="left:174px;top:516px;width:7px;height:16px;background:#fff;border-right:1px solid #6a6a6a;border-bottom:1px solid #6a6a6a"></div>
<div class="a" style="left:181px;top:516px;width:810px;height:15px;background:linear-gradient(#e8e8e8,#f0f0f0 50%,#e8e8e8)"></div>
<svg class="a" style="left:184px;top:519px;" width="6" height="9" viewBox="0 0 6 9"><path d="M5 1 L1 4.5 L5 8 Z" fill="#333"/></svg>
<svg class="a" style="left:979px;top:519px;" width="6" height="9" viewBox="0 0 6 9"><path d="M1 1 L5 4.5 L1 8 Z" fill="#333"/></svg>
<div class="a" style="left:199px;top:516px;width:36px;height:15px;background:linear-gradient(#f6f6f6,#e9e9e9 45%,#d2d2d2 100%);border:1px solid #8a8a8a;border-radius:2px"></div>
<svg class="a" style="left:212px;top:519px;" width="9" height="9" viewBox="0 0 9 9"><path d="M1.5 1v7M4 1v7M6.5 1v7" stroke="#333" stroke-width="1.2"/></svg>
<div class="a" style="left:991px;top:515px;width:17px;height:17px;background:#efefef"></div>
<svg class="a" style="left:996px;top:519px;" width="10" height="10" viewBox="0 0 10 10"><g fill="#999"><rect x="7" y="1" width="1" height="1"/><rect x="4" y="4" width="1" height="1"/><rect x="7" y="4" width="1" height="1"/><rect x="1" y="7" width="1" height="1"/><rect x="4" y="7" width="1" height="1"/><rect x="7" y="7" width="1" height="1"/></g></svg>
<div class="a" style="left:170px;top:535px;width:842px;height:23px;background:#ececec"></div>
<div class="a" style="left:1016px;top:96px;width:350px;height:612px;background:#ececec"></div>
<div class="a" style="left:1016px;top:96px;width:350px;height:16px;background:#bababa"></div>
<div class="t " style="left:1020px;top:99px;font-size:11.5px;color:#f5f5f5;">I/O View</div>
<svg class="a" style="left:1335px;top:101px;" width="10" height="6" viewBox="0 0 10 6"><path d="M0 0H10L5 5.5Z" fill="#f4f4f4"/></svg>
<svg class="a" style="left:1351px;top:98px;" width="11" height="11" viewBox="0 0 11 11"><path d="M1.5 1.5L9.5 9.5M9.5 1.5L1.5 9.5" stroke="#f4f4f4" stroke-width="1.6"/></svg>
<div class="a" style="left:1016px;top:112px;width:1px;height:596px;background:#a8a8a8"></div>
<div class="a" style="left:1017px;top:112px;width:349px;height:26px;background:#fff"></div>
<div class="a" style="left:1024px;top:112px;width:342px;height:26px;background:linear-gradient(#ffffff 0%,#f4f4f4 35%,#dedede 75%,#c6c6c6 100%)"></div>
<svg class="a" style="left:1032px;top:118px;" width="11" height="11" viewBox="0 0 11 11"><path d="M1.5 1.5L9.5 9.5M9.5 1.5L1.5 9.5" stroke="#000" stroke-width="1.3"/></svg>
<svg class="a" style="left:1051px;top:122px;" width="7" height="4" viewBox="0 0 7 4"><path d="M0 0H7L3.5 3.5Z" fill="#000"/></svg>
<div class="a" style="left:1060px;top:114px;width:22px;height:21px;background:#dbe9f9;border:1px solid #3d94f0"></div>
<div class="a" style="left:1081px;top:114px;width:24px;height:21px;background:#dbe9f9;border:1px solid #3d94f0"></div>
<svg class="a" style="left:1064px;top:117px;" width="15" height="16" viewBox="0 0 15 16"><path d="M7.5 4C7.5 1.5 12 1.5 12 4V12C12 14.5 7.5 14.5 7.5 12Z" fill="none" stroke="#0000ff" stroke-width="1.2"/><path d="M10.5 6H14.5L12.5 8.5Z" fill="#0000ff"/><path d="M3 11.5h4M5 11.5v3" stroke="#000" stroke-width="1.2"/></svg>
<svg class="a" style="left:1085px;top:117px;" width="16" height="16" viewBox="0 0 16 16"><path d="M8 2V11M3.5 7L8 11L12.5 7" fill="none" stroke="#000" stroke-width="1.2"/><path d="M2 12h13" stroke="#000" stroke-width="2"/></svg>
<div class="a" style="left:1107px;top:117px;width:143px;height:16px;background:#fff"></div>
<div class="t " style="left:1111px;top:119px;font-size:10.6px;color:#000;">ANALOG_COMPARATOR</div>
<div class="a" style="left:1238px;top:117px;width:12px;height:16px;background:linear-gradient(#e8e8e8,#d4d4d4)"></div>
<svg class="a" style="left:1241px;top:123px;" width="7" height="4" viewBox="0 0 7 4"><path d="M0 0H7L3.5 3.5Z" fill="#000"/></svg>
<svg class="a" style="left:1258px;top:118px;" width="14" height="13" viewBox="0 0 14 13"><path d="M1 1.5h12" stroke="#000" stroke-width="2"/><path d="M7 3V12M2.5 7.5L7 3L11.5 7.5" fill="none" stroke="#000" stroke-width="1.2"/></svg>
<div class="a" style="left:1017px;top:137px;width:349px;height:1px;background:#b4b4b4"></div>
<div class="a" style="left:1017px;top:138px;width:349px;height:270px;background:#fff"></div>
<div class="a" style="left:1017px;top:138px;width:331px;height:20px;background:linear-gradient(#fff 0 8px,#f1f2f4 8px)"></div>
<div class="a" style="left:1017px;top:158px;width:331px;height:1px;background:#d5d5d5"></div>
<div class="a" style="left:1181px;top:139px;width:1px;height:19px;background:#e3e3e3"></div>
<div class="a" style="left:1281px;top:139px;width:1px;height:19px;background:#e3e3e3"></div>
<div class="t " style="left:1040px;top:144px;font-size:11.2px;color:#000;">Name</div>
<div class="t " style="left:1187px;top:144px;font-size:11.2px;color:#000;">Value</div>
<div class="a" style="left:1348px;top:139px;width:16px;height:268px;background:linear-gradient(90deg,#e6e6e6,#f2f2f2 50%,#e6e6e6)"></div>
<svg class="a" style="left:1352px;top:144px;" width="9" height="6" viewBox="0 0 9 6"><path d="M1 5L4.5 1L8 5Z" fill="#333"/></svg>
<svg class="a" style="left:1352px;top:395px;" width="9" height="6" viewBox="0 0 9 6"><path d="M1 1L4.5 5L8 1Z" fill="#333"/></svg>
<div class="a" style="left:1349px;top:165px;width:14px;height:224px;background:linear-gradient(90deg,#f6f6f6,#e6e6e6 45%,#cfcfcf);border:1px solid #8a8a8a;border-radius:2px"></div>
<svg class="a" style="left:1351px;top:272px;" width="9" height="8" viewBox="0 0 9 8"><path d="M1 1h7M1 3.5h7M1 6h7" stroke="#333" stroke-width="1.2"/></svg>
<div class="a" style="left:1017px;top:159px;width:331px;height:248px;overflow:hidden">
<div class="a" style="left:35px;top:-8px;width:129px;height:16px;background:#f0f0f0"></div>
<svg class="a" style="left:6px;top:-4px;" width="10" height="10" viewBox="0 0 10 10"><defs><linearGradient id="iob" x1="0" y1="0" x2="1" y2="1"><stop offset="0" stop-color="#f4f4f4"/><stop offset="1" stop-color="#d0d0d0"/></linearGradient></defs><rect x="0" y="0" width="10" height="10" fill="url(#iob)"/><path d="M0 9.5H9.5V0" fill="none" stroke="#8a8a8a"/><path d="M0.5 9V0.5H9" fill="none" stroke="#fff"/><path d="M2 4.5h5M4.5 2v5" stroke="#666" stroke-width="1"/></svg>
<svg class="a" style="left:19px;top:-8px;" width="16" height="16" viewBox="0 0 16 16"><path d="M4.5 1.5H8.5C13 1.5 14.5 5 14.5 7.5S13 13.5 8.5 13.5H4.5Z" fill="#fff" stroke="#000" stroke-width="1.2"/><path d="M1 4.5h3.5M1 10.5h3.5" stroke="#000" stroke-width="1.8"/><path d="M14.5 7.5h1.5" stroke="#000" stroke-width="1.5"/></svg>
<div class="t " style="left:37px;top:-6px;font-size:11px;color:#000;">AD_CONVERTER</div>
<svg class="a" style="left:6px;top:13px;" width="10" height="10" viewBox="0 0 10 10"><defs><linearGradient id="iob" x1="0" y1="0" x2="1" y2="1"><stop offset="0" stop-color="#f4f4f4"/><stop offset="1" stop-color="#d0d0d0"/></linearGradient></defs><rect x="0" y="0" width="10" height="10" fill="url(#iob)"/><path d="M0 9.5H9.5V0" fill="none" stroke="#8a8a8a"/><path d="M0.5 9V0.5H9" fill="none" stroke="#fff"/><path d="M2 4.5h5M4.5 2v5" stroke="#666" stroke-width="1"/></svg>
<svg class="a" style="left:19px;top:9px;" width="16" height="16" viewBox="0 0 16 16"><path d="M4.5 1.5H8.5C13 1.5 14.5 5 14.5 7.5S13 13.5 8.5 13.5H4.5Z" fill="#fff" stroke="#000" stroke-width="1.2"/><path d="M1 4.5h3.5M1 10.5h3.5" stroke="#000" stroke-width="1.8"/><path d="M14.5 7.5h1.5" stroke="#000" stroke-width="1.5"/></svg>
<div class="t " style="left:37px;top:11px;font-size:11px;color:#000;">ANALOG_COMPARAT...</div>
<svg class="a" style="left:6px;top:30px;" width="10" height="10" viewBox="0 0 10 10"><defs><linearGradient id="iob" x1="0" y1="0" x2="1" y2="1"><stop offset="0" stop-color="#f4f4f4"/><stop offset="1" stop-color="#d0d0d0"/></linearGradient></defs><rect x="0" y="0" width="10" height="10" fill="url(#iob)"/><path d="M0 9.5H9.5V0" fill="none" stroke="#8a8a8a"/><path d="M0.5 9V0.5H9" fill="none" stroke="#fff"/><path d="M2 4.5h5M4.5 2v5" stroke="#666" stroke-width="1"/></svg>
<svg class="a" style="left:19px;top:26px;" width="16" height="16" viewBox="0 0 16 16"><rect x="0.5" y="0.5" width="14" height="14" fill="#0000ff"/><path d="M2 2.5h8l3 3v8H2Z" fill="#fff" stroke="#000" stroke-width="1.1"/><path d="M4 6h5M4 8.5h7M4 11h7" stroke="#000" stroke-width="1"/></svg>
<div class="t " style="left:37px;top:28px;font-size:11px;color:#000;">CPU</div>
<svg class="a" style="left:6px;top:47px;" width="10" height="10" viewBox="0 0 10 10"><defs><linearGradient id="iob" x1="0" y1="0" x2="1" y2="1"><stop offset="0" stop-color="#f4f4f4"/><stop offset="1" stop-color="#d0d0d0"/></linearGradient></defs><rect x="0" y="0" width="10" height="10" fill="url(#iob)"/><path d="M0 9.5H9.5V0" fill="none" stroke="#8a8a8a"/><path d="M0.5 9V0.5H9" fill="none" stroke="#fff"/><path d="M2 4.5h5M4.5 2v5" stroke="#666" stroke-width="1"/></svg>
<svg class="a" style="left:19px;top:43px;" width="16" height="16" viewBox="0 0 16 16"><rect x="0.5" y="0.5" width="14" height="14" fill="#0000ff"/><path d="M2 2.5h8l3 3v8H2Z" fill="#fff" stroke="#000" stroke-width="1.1"/><path d="M4 6h5M4 8.5h7M4 11h7" stroke="#000" stroke-width="1"/></svg>
<div class="t " style="left:37px;top:45px;font-size:11px;color:#000;">EEPROM</div>
<svg class="a" style="left:6px;top:64px;" width="10" height="10" viewBox="0 0 10 10"><defs><linearGradient id="iob" x1="0" y1="0" x2="1" y2="1"><stop offset="0" stop-color="#f4f4f4"/><stop offset="1" stop-color="#d0d0d0"/></linearGradient></defs><rect x="0" y="0" width="10" height="10" fill="url(#iob)"/><path d="M0 9.5H9.5V0" fill="none" stroke="#8a8a8a"/><path d="M0.5 9V0.5H9" fill="none" stroke="#fff"/><path d="M2 4.5h5M4.5 2v5" stroke="#666" stroke-width="1"/></svg>
<svg class="a" style="left:19px;top:60px;" width="16" height="16" viewBox="0 0 16 16"><path d="M1 5.5C1.5 2 6 0 9 2L12.5 7.5L13.5 9.5L5.5 12L4.5 9.5Z" fill="#ffff00" stroke="#000" stroke-width="0.9"/><path d="M3 4C4 3 5 2.5 6 2.5" stroke="#fff" stroke-width="1.2" fill="none"/><g fill="none" stroke="#000" stroke-width="1"><path d="M8.5 13A3.5 3.5 0 0 0 13 10.5"/><path d="M8.5 15A5.5 5.5 0 0 0 15 10.5"/></g></svg>
<div class="t " style="left:37px;top:62px;font-size:11px;color:#000;">EXTERNAL_INTERRU...</div>
<svg class="a" style="left:6px;top:81px;" width="10" height="10" viewBox="0 0 10 10"><defs><linearGradient id="iob" x1="0" y1="0" x2="1" y2="1"><stop offset="0" stop-color="#f4f4f4"/><stop offset="1" stop-color="#d0d0d0"/></linearGradient></defs><rect x="0" y="0" width="10" height="10" fill="url(#iob)"/><path d="M0 9.5H9.5V0" fill="none" stroke="#8a8a8a"/><path d="M0.5 9V0.5H9" fill="none" stroke="#fff"/><path d="M2 4.5h5M4.5 2v5" stroke="#666" stroke-width="1"/></svg>
<svg class="a" style="left:19px;top:77px;" width="16" height="16" viewBox="0 0 16 16"><rect x="1" y="1" width="14" height="14" rx="2.5" fill="#ffff00"/><g fill="none" stroke="#008000" stroke-width="1.8"><path d="M1 4.2h8"/><circle cx="11.6" cy="4.2" r="2.1"/><path d="M1 7.8h4.5l1.5 1.5h8"/><path d="M4 12.6h11"/></g><circle cx="2.5" cy="12.6" r="1.5" fill="#008000"/></svg>
<div class="t " style="left:37px;top:79px;font-size:11px;color:#000;">PORTB</div>
<svg class="a" style="left:6px;top:98px;" width="10" height="10" viewBox="0 0 10 10"><defs><linearGradient id="iob" x1="0" y1="0" x2="1" y2="1"><stop offset="0" stop-color="#f4f4f4"/><stop offset="1" stop-color="#d0d0d0"/></linearGradient></defs><rect x="0" y="0" width="10" height="10" fill="url(#iob)"/><path d="M0 9.5H9.5V0" fill="none" stroke="#8a8a8a"/><path d="M0.5 9V0.5H9" fill="none" stroke="#fff"/><path d="M2 4.5h5M4.5 2v5" stroke="#666" stroke-width="1"/></svg>
<svg class="a" style="left:19px;top:94px;" width="16" height="16" viewBox="0 0 16 16"><rect x="1" y="1" width="14" height="14" rx="2.5" fill="#ffff00"/><g fill="none" stroke="#008000" stroke-width="1.8"><path d="M1 4.2h8"/><circle cx="11.6" cy="4.2" r="2.1"/><path d="M1 7.8h4.5l1.5 1.5h8"/><path d="M4 12.6h11"/></g><circle cx="2.5" cy="12.6" r="1.5" fill="#008000"/></svg>
<div class="t " style="left:37px;top:96px;font-size:11px;color:#000;">PORTC</div>
<svg class="a" style="left:6px;top:115px;" width="10" height="10" viewBox="0 0 10 10"><defs><linearGradient id="iob" x1="0" y1="0" x2="1" y2="1"><stop offset="0" stop-color="#f4f4f4"/><stop offset="1" stop-color="#d0d0d0"/></linearGradient></defs><rect x="0" y="0" width="10" height="10" fill="url(#iob)"/><path d="M0 9.5H9.5V0" fill="none" stroke="#8a8a8a"/><path d="M0.5 9V0.5H9" fill="none" stroke="#fff"/><path d="M2 4.5h5M4.5 2v5" stroke="#666" stroke-width="1"/></svg>
<svg class="a" style="left:19px;top:111px;" width="16" height="16" viewBox="0 0 16 16"><rect x="1" y="1" width="14" height="14" rx="2.5" fill="#ffff00"/><g fill="none" stroke="#008000" stroke-width="1.8"><path d="M1 4.2h8"/><circle cx="11.6" cy="4.2" r="2.1"/><path d="M1 7.8h4.5l1.5 1.5h8"/><path d="M4 12.6h11"/></g><circle cx="2.5" cy="12.6" r="1.5" fill="#008000"/></svg>
<div class="t " style="left:37px;top:113px;font-size:11px;color:#000;">PORTD</div>
<svg class="a" style="left:6px;top:132px;" width="10" height="10" viewBox="0 0 10 10"><defs><linearGradient id="iob" x1="0" y1="0" x2="1" y2="1"><stop offset="0" stop-color="#f4f4f4"/><stop offset="1" stop-color="#d0d0d0"/></linearGradient></defs><rect x="0" y="0" width="10" height="10" fill="url(#iob)"/><path d="M0 9.5H9.5V0" fill="none" stroke="#8a8a8a"/><path d="M0.5 9V0.5H9" fill="none" stroke="#fff"/><path d="M2 4.5h5M4.5 2v5" stroke="#666" stroke-width="1"/></svg>
<svg class="a" style="left:19px;top:128px;" width="16" height="16" viewBox="0 0 16 16"><rect x="1.5" y="0.5" width="5" height="3" fill="#00e8f0"/><path d="M1 0.5v4h6" fill="none" stroke="#222" stroke-width="1"/><rect x="1.5" y="8.5" width="5" height="3" fill="#00e8f0"/><path d="M1 8.5v4h6" fill="none" stroke="#222" stroke-width="1"/><path d="M1 14.5h4" stroke="#00c000" stroke-width="1.2"/><path d="M9 2.5h3.5v4H9M9 10.5h3.5v4H9" fill="none" stroke="#222" stroke-width="1" stroke-dasharray="2 1"/><path d="M7 6.5h2M7 12.5h2" stroke="#222"/></svg>
<div class="t " style="left:37px;top:130px;font-size:11px;color:#000;">SPI</div>
<svg class="a" style="left:6px;top:149px;" width="10" height="10" viewBox="0 0 10 10"><defs><linearGradient id="iob" x1="0" y1="0" x2="1" y2="1"><stop offset="0" stop-color="#f4f4f4"/><stop offset="1" stop-color="#d0d0d0"/></linearGradient></defs><rect x="0" y="0" width="10" height="10" fill="url(#iob)"/><path d="M0 9.5H9.5V0" fill="none" stroke="#8a8a8a"/><path d="M0.5 9V0.5H9" fill="none" stroke="#fff"/><path d="M2 4.5h5M4.5 2v5" stroke="#666" stroke-width="1"/></svg>
<svg class="a" style="left:19px;top:145px;" width="16" height="16" viewBox="0 0 16 16"><rect x="0.5" y="1" width="15" height="14.5" rx="2" fill="#ffff00"/><circle cx="8" cy="9" r="6.3" fill="#fff" stroke="#000" stroke-width="1.5"/><path d="M6.5 1.5h3" stroke="#000" stroke-width="1.5"/><path d="M8 2v1" stroke="#000"/><path d="M5 6.5L8 9L11 11" fill="none" stroke="#000" stroke-width="1.1"/><g fill="#000"><rect x="7.5" y="4" width="1" height="1"/><rect x="4" y="8.5" width="1" height="1"/><rect x="11" y="8.5" width="1" height="1"/><rect x="7.5" y="12.5" width="1" height="1"/><rect x="10" y="5" width="1" height="1"/><rect x="5" y="12" width="1" height="1"/></g></svg>
<div class="t " style="left:37px;top:147px;font-size:11px;color:#000;">TIMER_COUNTER_0</div>
<svg class="a" style="left:6px;top:166px;" width="10" height="10" viewBox="0 0 10 10"><defs><linearGradient id="iob" x1="0" y1="0" x2="1" y2="1"><stop offset="0" stop-color="#f4f4f4"/><stop offset="1" stop-color="#d0d0d0"/></linearGradient></defs><rect x="0" y="0" width="10" height="10" fill="url(#iob)"/><path d="M0 9.5H9.5V0" fill="none" stroke="#8a8a8a"/><path d="M0.5 9V0.5H9" fill="none" stroke="#fff"/><path d="M2 4.5h5M4.5 2v5" stroke="#666" stroke-width="1"/></svg>
<svg class="a" style="left:19px;top:162px;" width="16" height="16" viewBox="0 0 16 16"><rect x="0.5" y="1" width="15" height="14.5" rx="2" fill="#ffff00"/><circle cx="8" cy="9" r="6.3" fill="#fff" stroke="#000" stroke-width="1.5"/><path d="M6.5 1.5h3" stroke="#000" stroke-width="1.5"/><path d="M8 2v1" stroke="#000"/><path d="M5 6.5L8 9L11 11" fill="none" stroke="#000" stroke-width="1.1"/><g fill="#000"><rect x="7.5" y="4" width="1" height="1"/><rect x="4" y="8.5" width="1" height="1"/><rect x="11" y="8.5" width="1" height="1"/><rect x="7.5" y="12.5" width="1" height="1"/><rect x="10" y="5" width="1" height="1"/><rect x="5" y="12" width="1" height="1"/></g></svg>
<div class="t " style="left:37px;top:164px;font-size:11px;color:#000;">TIMER_COUNTER_1</div>
<svg class="a" style="left:6px;top:183px;" width="10" height="10" viewBox="0 0 10 10"><defs><linearGradient id="iob" x1="0" y1="0" x2="1" y2="1"><stop offset="0" stop-color="#f4f4f4"/><stop offset="1" stop-color="#d0d0d0"/></linearGradient></defs><rect x="0" y="0" width="10" height="10" fill="url(#iob)"/><path d="M0 9.5H9.5V0" fill="none" stroke="#8a8a8a"/><path d="M0.5 9V0.5H9" fill="none" stroke="#fff"/><path d="M2 4.5h5M4.5 2v5" stroke="#666" stroke-width="1"/></svg>
<svg class="a" style="left:19px;top:179px;" width="16" height="16" viewBox="0 0 16 16"><rect x="0.5" y="1" width="15" height="14.5" rx="2" fill="#ffff00"/><circle cx="8" cy="9" r="6.3" fill="#fff" stroke="#000" stroke-width="1.5"/><path d="M6.5 1.5h3" stroke="#000" stroke-width="1.5"/><path d="M8 2v1" stroke="#000"/><path d="M5 6.5L8 9L11 11" fill="none" stroke="#000" stroke-width="1.1"/><g fill="#000"><rect x="7.5" y="4" width="1" height="1"/><rect x="4" y="8.5" width="1" height="1"/><rect x="11" y="8.5" width="1" height="1"/><rect x="7.5" y="12.5" width="1" height="1"/><rect x="10" y="5" width="1" height="1"/><rect x="5" y="12" width="1" height="1"/></g></svg>
<div class="t " style="left:37px;top:181px;font-size:11px;color:#000;">TIMER_COUNTER_2</div>
<svg class="a" style="left:6px;top:200px;" width="10" height="10" viewBox="0 0 10 10"><defs><linearGradient id="iob" x1="0" y1="0" x2="1" y2="1"><stop offset="0" stop-color="#f4f4f4"/><stop offset="1" stop-color="#d0d0d0"/></linearGradient></defs><rect x="0" y="0" width="10" height="10" fill="url(#iob)"/><path d="M0 9.5H9.5V0" fill="none" stroke="#8a8a8a"/><path d="M0.5 9V0.5H9" fill="none" stroke="#fff"/><path d="M2 4.5h5M4.5 2v5" stroke="#666" stroke-width="1"/></svg>
<svg class="a" style="left:19px;top:196px;" width="16" height="16" viewBox="0 0 16 16"><rect x="1.5" y="0.5" width="5" height="3" fill="#00e8f0"/><path d="M1 0.5v4h6" fill="none" stroke="#222" stroke-width="1"/><rect x="1.5" y="8.5" width="5" height="3" fill="#00e8f0"/><path d="M1 8.5v4h6" fill="none" stroke="#222" stroke-width="1"/><path d="M1 14.5h4" stroke="#00c000" stroke-width="1.2"/><path d="M9 2.5h3.5v4H9M9 10.5h3.5v4H9" fill="none" stroke="#222" stroke-width="1" stroke-dasharray="2 1"/><path d="M7 6.5h2M7 12.5h2" stroke="#222"/></svg>
<div class="t " style="left:37px;top:198px;font-size:11px;color:#000;">TWI</div>
<svg class="a" style="left:6px;top:217px;" width="10" height="10" viewBox="0 0 10 10"><defs><linearGradient id="iob" x1="0" y1="0" x2="1" y2="1"><stop offset="0" stop-color="#f4f4f4"/><stop offset="1" stop-color="#d0d0d0"/></linearGradient></defs><rect x="0" y="0" width="10" height="10" fill="url(#iob)"/><path d="M0 9.5H9.5V0" fill="none" stroke="#8a8a8a"/><path d="M0.5 9V0.5H9" fill="none" stroke="#fff"/><path d="M2 4.5h5M4.5 2v5" stroke="#666" stroke-width="1"/></svg>
<svg class="a" style="left:19px;top:213px;" width="16" height="16" viewBox="0 0 16 16"><rect x="1.5" y="0.5" width="5" height="3" fill="#00e8f0"/><path d="M1 0.5v4h6" fill="none" stroke="#222" stroke-width="1"/><rect x="1.5" y="8.5" width="5" height="3" fill="#00e8f0"/><path d="M1 8.5v4h6" fill="none" stroke="#222" stroke-width="1"/><path d="M1 14.5h4" stroke="#00c000" stroke-width="1.2"/><path d="M9 2.5h3.5v4H9M9 10.5h3.5v4H9" fill="none" stroke="#222" stroke-width="1" stroke-dasharray="2 1"/><path d="M7 6.5h2M7 12.5h2" stroke="#222"/></svg>
<div class="t " style="left:37px;top:215px;font-size:11px;color:#000;">USART</div>
<svg class="a" style="left:6px;top:234px;" width="10" height="10" viewBox="0 0 10 10"><defs><linearGradient id="iob" x1="0" y1="0" x2="1" y2="1"><stop offset="0" stop-color="#f4f4f4"/><stop offset="1" stop-color="#d0d0d0"/></linearGradient></defs><rect x="0" y="0" width="10" height="10" fill="url(#iob)"/><path d="M0 9.5H9.5V0" fill="none" stroke="#8a8a8a"/><path d="M0.5 9V0.5H9" fill="none" stroke="#fff"/><path d="M2 4.5h5M4.5 2v5" stroke="#666" stroke-width="1"/></svg>
<svg class="a" style="left:19px;top:230px;" width="16" height="16" viewBox="0 0 16 16"><rect x="0.5" y="0.5" width="15" height="15" rx="2" fill="#ffff00"/><path d="M3 3L6 1L11 1.5L14 4L13 9L9 15H1.5L2 9Z" fill="#fff" stroke="#000" stroke-width="0.8"/><path d="M5 4.5h1.5M10 4h1.5" stroke="#000" stroke-width="1.4"/><path d="M2.5 13L6 9.5M5.5 15L9 11.5M8 7.5l2 1" stroke="#000" stroke-width="1.5"/></svg>
<div class="t " style="left:37px;top:232px;font-size:11px;color:#000;">WATCHDOG</div>
</div>
<div class="a" style="left:1017px;top:138px;width:1px;height:270px;background:#d0d0d0"></div>
<div class="a" style="left:1016px;top:408px;width:350px;height:1px;background:#c8c8c8"></div>
<div class="a" style="left:1016px;top:409px;width:350px;height:1px;background:#8c8c8c"></div>
<div class="a" style="left:1016px;top:410px;width:350px;height:2px;background:#1e1e1e"></div>
<div class="a" style="left:1016px;top:412px;width:350px;height:2px;background:#f4f4f4"></div>
<div class="a" style="left:1365px;top:137px;width:1px;height:570px;background:#9a9a9a"></div>
<div class="a" style="left:1017px;top:414px;width:349px;height:294px;background:#fff"></div>
<div class="a" style="left:1017px;top:414px;width:339px;height:20px;background:linear-gradient(#fff 0 9px,#f1f2f4 9px)"></div>
<div class="a" style="left:1017px;top:433px;width:339px;height:1px;background:#d5d5d5"></div>
<div class="a" style="left:1124px;top:415px;width:1px;height:18px;background:#e3e3e3"></div>
<div class="a" style="left:1194px;top:415px;width:1px;height:18px;background:#e3e3e3"></div>
<div class="a" style="left:1244px;top:415px;width:1px;height:18px;background:#e3e3e3"></div>
<div class="a" style="left:1356px;top:415px;width:1px;height:18px;background:#e3e3e3"></div>
<div class="t " style="left:1040px;top:419px;font-size:11.2px;color:#000;">Name</div>
<div class="t " style="left:1130px;top:419px;font-size:11.2px;color:#000;">Address</div>
<div class="t " style="left:1200px;top:419px;font-size:11.2px;color:#000;">Value</div>
<div class="t " style="left:1250px;top:419px;font-size:11.2px;color:#000;">Bits</div>
<svg class="a" style="left:1023px;top:439px;" width="10" height="10" viewBox="0 0 10 10"><defs><linearGradient id="iob" x1="0" y1="0" x2="1" y2="1"><stop offset="0" stop-color="#f4f4f4"/><stop offset="1" stop-color="#d0d0d0"/></linearGradient></defs><rect x="0" y="0" width="10" height="10" fill="url(#iob)"/><path d="M0 9.5H9.5V0" fill="none" stroke="#8a8a8a"/><path d="M0.5 9V0.5H9" fill="none" stroke="#fff"/><path d="M2 4.5h5M4.5 2v5" stroke="#666" stroke-width="1"/></svg>
<svg class="a" style="left:1036px;top:435px;" width="16" height="16" viewBox="0 0 16 16"><path d="M4.5 1.5H8.5C13 1.5 14.5 5 14.5 7.5S13 13.5 8.5 13.5H4.5Z" fill="#fff" stroke="#000" stroke-width="1.2"/><path d="M1 4.5h3.5M1 10.5h3.5" stroke="#000" stroke-width="1.8"/><path d="M14.5 7.5h1.5" stroke="#000" stroke-width="1.5"/></svg>
<div class="t " style="left:1054px;top:437px;font-size:11px;color:#000;">ADC</div>
<div class="t " style="left:1136px;top:437px;font-size:11px;color:#000;">0x04 (0x24)</div>
<svg class="a" style="left:1023px;top:456px;" width="10" height="10" viewBox="0 0 10 10"><defs><linearGradient id="iob" x1="0" y1="0" x2="1" y2="1"><stop offset="0" stop-color="#f4f4f4"/><stop offset="1" stop-color="#d0d0d0"/></linearGradient></defs><rect x="0" y="0" width="10" height="10" fill="url(#iob)"/><path d="M0 9.5H9.5V0" fill="none" stroke="#8a8a8a"/><path d="M0.5 9V0.5H9" fill="none" stroke="#fff"/><path d="M2 4.5h5M4.5 2v5" stroke="#666" stroke-width="1"/></svg>
<svg class="a" style="left:1036px;top:452px;" width="16" height="16" viewBox="0 0 16 16"><path d="M3 14L6 2" stroke="#000" stroke-width="1.4"/><path d="M2 4L6 2L13 4L10 9L5 7Z" fill="#ff0000" stroke="#000" stroke-width="0.8"/><path d="M1 3L4 8" stroke="#000" stroke-width="1"/></svg>
<div class="t " style="left:1054px;top:454px;font-size:11px;color:#000;">ADCSRA</div>
<div class="t " style="left:1136px;top:454px;font-size:11px;color:#000;">0x06 (0x26)</div>
<div class="a" style="left:1245px;top:453px;width:12px;height:12px;background:#c0c0c0;border:1.5px solid #1a1a1a"></div>
<div class="a" style="left:1259px;top:453px;width:12px;height:12px;background:#c0c0c0;border:1.5px solid #1a1a1a"></div>
<div class="a" style="left:1273px;top:453px;width:12px;height:12px;background:#c0c0c0;border:1.5px solid #1a1a1a"></div>
<div class="a" style="left:1287px;top:453px;width:12px;height:12px;background:#c0c0c0;border:1.5px solid #1a1a1a"></div>
<div class="a" style="left:1301px;top:453px;width:12px;height:12px;background:#c0c0c0;border:1.5px solid #1a1a1a"></div>
<div class="a" style="left:1315px;top:453px;width:12px;height:12px;background:#c0c0c0;border:1.5px solid #1a1a1a"></div>
<div class="a" style="left:1329px;top:453px;width:12px;height:12px;background:#c0c0c0;border:1.5px solid #1a1a1a"></div>
<div class="a" style="left:1343px;top:453px;width:12px;height:12px;background:#c0c0c0;border:1.5px solid #1a1a1a"></div>
<svg class="a" style="left:1023px;top:473px;" width="10" height="10" viewBox="0 0 10 10"><defs><linearGradient id="iob" x1="0" y1="0" x2="1" y2="1"><stop offset="0" stop-color="#f4f4f4"/><stop offset="1" stop-color="#d0d0d0"/></linearGradient></defs><rect x="0" y="0" width="10" height="10" fill="url(#iob)"/><path d="M0 9.5H9.5V0" fill="none" stroke="#8a8a8a"/><path d="M0.5 9V0.5H9" fill="none" stroke="#fff"/><path d="M2 4.5h5M4.5 2v5" stroke="#666" stroke-width="1"/></svg>
<svg class="a" style="left:1036px;top:469px;" width="16" height="16" viewBox="0 0 16 16"><path d="M4.5 1.5H8.5C13 1.5 14.5 5 14.5 7.5S13 13.5 8.5 13.5H4.5Z" fill="#fff" stroke="#000" stroke-width="1.2"/><path d="M1 4.5h3.5M1 10.5h3.5" stroke="#000" stroke-width="1.8"/><path d="M14.5 7.5h1.5" stroke="#000" stroke-width="1.5"/></svg>
<div class="t " style="left:1054px;top:471px;font-size:11px;color:#000;">ADMUX</div>
<div class="t " style="left:1136px;top:471px;font-size:11px;color:#000;">0x07 (0x27)</div>
<div class="a" style="left:1245px;top:470px;width:12px;height:12px;background:#c0c0c0;border:1.5px solid #1a1a1a"></div>
<div class="a" style="left:1259px;top:470px;width:12px;height:12px;background:#c0c0c0;border:1.5px solid #1a1a1a"></div>
<div class="a" style="left:1273px;top:470px;width:12px;height:12px;background:#c0c0c0;border:1.5px solid #1a1a1a"></div>
<div class="a" style="left:1287px;top:471px;width:11px;height:10px;background:#c4c4c4"></div>
<div class="a" style="left:1301px;top:470px;width:12px;height:12px;background:#c0c0c0;border:1.5px solid #1a1a1a"></div>
<div class="a" style="left:1315px;top:470px;width:12px;height:12px;background:#c0c0c0;border:1.5px solid #1a1a1a"></div>
<div class="a" style="left:1329px;top:470px;width:12px;height:12px;background:#c0c0c0;border:1.5px solid #1a1a1a"></div>
<div class="a" style="left:1343px;top:470px;width:12px;height:12px;background:#c0c0c0;border:1.5px solid #1a1a1a"></div>
<div class="a" style="left:0px;top:558px;width:1016px;height:4px;background:#e4e4e4"></div>
<div class="a" style="left:0px;top:562px;width:1012px;height:17px;background:#bababa;border-top:1px solid #a8a8a8;border-left:1px solid #a8a8a8;border-bottom:1px solid #a8a8a8"></div>
<div class="t " style="left:4px;top:566px;font-size:11.5px;color:#f5f5f5;">Build</div>
<svg class="a" style="left:981px;top:567px;" width="10" height="6" viewBox="0 0 10 6"><path d="M0 0H10L5 5.5Z" fill="#f4f4f4"/></svg>
<svg class="a" style="left:997px;top:564px;" width="11" height="11" viewBox="0 0 11 11"><path d="M1.5 1.5L9.5 9.5M9.5 1.5L1.5 9.5" stroke="#f4f4f4" stroke-width="1.6"/></svg>
<div class="a" style="left:0px;top:579px;width:1012px;height:103px;background:#e8e8e8"></div>
<div class="a" style="left:0px;top:580px;width:1012px;height:102px;background:#fff;border-left:1px solid #a0a0a0;border-top:1px solid #a0a0a0;border-right:1px solid #c8c8c8"></div>
<div class="t mono" style="left:27px;top:585px;font-size:11.6px;line-height:19px">[.cseg] 0x000000 0x0001f8    504      0    504    8192   6.2%
[.dseg] 0x000060 0x000062      0      2      2    1024   0.2%
[.eseg] 0x000000 0x000000      0      0      0     512   0.0%

<span style="margin-left:-1px">Assembly complete, 0 errors. 3 warnings</span></div>
<svg class="a" style="left:10px;top:663px;" width="11" height="11" viewBox="0 0 11 11"><circle cx="5.5" cy="5.5" r="4.6" fill="#00e000"/></svg>
<div class="a" style="left:992px;top:584px;width:16px;height:96px;background:linear-gradient(90deg,#e8e8e8,#f2f2f2 50%,#e8e8e8)"></div>
<svg class="a" style="left:996px;top:591px;" width="9" height="6" viewBox="0 0 9 6"><path d="M1 5L4.5 1.5L8 5Z" fill="#333"/></svg>
<svg class="a" style="left:996px;top:670px;" width="9" height="6" viewBox="0 0 9 6"><path d="M1 1L4.5 4.5L8 1Z" fill="#333"/></svg>
<div class="a" style="left:992px;top:646px;width:15px;height:16px;background:linear-gradient(90deg,#f6f6f6,#e6e6e6 45%,#cfcfcf);border:1px solid #8a8a8a;border-radius:2px"></div>
<div class="a" style="left:0px;top:682px;width:1012px;height:24px;background:#dfdfdf"></div>
<div class="a" style="left:57px;top:682px;width:955px;height:1px;background:#6a6a6a"></div>
<div class="a" style="left:0px;top:683px;width:1012px;height:1px;background:#f2f2f2"></div>
<div class="a" style="left:0px;top:706px;width:1016px;height:1px;background:#8c8c8c"></div>
<div class="a" style="left:0px;top:581px;width:1px;height:101px;background:#777"></div>
<div class="a" style="left:1011px;top:580px;width:1px;height:102px;background:#a0a0a0"></div>
<div class="a" style="left:0px;top:681px;width:1011px;height:1px;background:#f0f0f0"></div>
<div class="a" style="left:2px;top:681px;width:56px;height:24px;background:#fff;border:1px solid #9a9a9a;border-top:none;border-radius:0 0 5px 5px"></div>
<svg class="a" style="left:8px;top:686px;" width="14" height="14" viewBox="0 0 14 14"><rect x="0.5" y="0.5" width="13" height="13" fill="#fff" stroke="#2a3a7a"/><rect x="1" y="1" width="12" height="2" fill="#6a8ae8"/><path d="M3 5.5h7M3 7.5h5M3 9.5h7M3 11.5h5" stroke="#4a6ad0" stroke-width="1"/></svg>
<div class="t " style="left:24px;top:689px;font-size:12.3px;color:#000;">Build</div>
<svg class="a" style="left:63px;top:686px;" width="15" height="14" viewBox="0 0 15 14"><circle cx="7.5" cy="7" r="6.5" fill="#ff0000" stroke="#000" stroke-width="1.2"/><rect x="6.3" y="5.5" width="2.4" height="6" fill="#fff"/><rect x="6.3" y="2.5" width="2.4" height="2" fill="#fff"/></svg>
<div class="t " style="left:80px;top:689px;font-size:11.3px;color:#7a7a7a;">Message</div>
<div class="a" style="left:131px;top:687px;width:1px;height:14px;background:#a8a8a8"></div>
<svg class="a" style="left:136px;top:685px;" width="15" height="15" viewBox="0 0 15 15"><rect x="0.5" y="0.5" width="12" height="9" fill="#fff" stroke="#2a4a9a"/><rect x="0.5" y="0.5" width="12" height="2" fill="#4a7ad0"/><path d="M2.5 4.5h8M2.5 6.5h6" stroke="#2a4a9a"/><path d="M7 9h3v5H7ZM11 9h3v5h-3Z" fill="#000"/></svg>
<div class="t " style="left:154px;top:689px;font-size:11.5px;color:#7a7a7a;">Find in Files</div>
<div class="a" style="left:222px;top:687px;width:1px;height:14px;background:#a8a8a8"></div>
<svg class="a" style="left:227px;top:685px;" width="16" height="16" viewBox="0 0 16 16"><rect x="0.5" y="0.5" width="13" height="12" fill="#fff" stroke="#3a5aa0"/><rect x="0.5" y="0.5" width="13" height="2" fill="#6a90d8"/><circle cx="10" cy="11" r="4.5" fill="#e03a2a"/></svg>
<div class="t " style="left:245px;top:689px;font-size:11.7px;color:#7a7a7a;">Breakpoints and Tracepoints</div>
<div class="a" style="left:170px;top:535px;width:842px;height:23px;background:#efefef"></div>
<div class="a" style="left:172px;top:534px;width:840px;height:1px;background:#6e6e6e"></div>
<div class="a" style="left:173px;top:534px;width:208px;height:22px;background:#fff;border:1px solid #9a9a9a;border-top:none;border-radius:0 0 4px 4px"></div>
<svg class="a" style="left:178px;top:539px;" width="12" height="13" viewBox="0 0 12 13"><path d="M0.5 0.5h8l3 3v9H0.5Z" fill="#dcdcdc" stroke="#000"/><path d="M2 3.5h5M2 5.5h7M2 7.5h7M2 9.5h7" stroke="#0000b0" stroke-width="1"/></svg>
<div class="t " style="left:194px;top:541px;font-size:11.55px;color:#000;font-weight:bold">D:\Work\AVR\ADC\ADC\ADC.asm</div>
<svg class="a" style="left:388px;top:539px;" width="12" height="13" viewBox="0 0 12 13"><path d="M0.5 0.5h8l3 3v9H0.5Z" fill="#dcdcdc" stroke="#000"/><path d="M2 3.5h5M2 5.5h7M2 7.5h7M2 9.5h7" stroke="#0000b0" stroke-width="1"/></svg>
<div class="t " style="left:402px;top:541px;font-size:11.2px;color:#7a7a7a;">C:\AVR\WH3\hd44780.asm</div>
<svg class="a" style="left:979px;top:541px;" width="7" height="11" viewBox="0 0 7 11"><path d="M5.5 1L1 5.5L5.5 10Z" fill="none" stroke="#333" stroke-width="1.1"/></svg>
<svg class="a" style="left:997px;top:541px;" width="7" height="11" viewBox="0 0 7 11"><path d="M1.5 1L6 5.5L1.5 10Z" fill="none" stroke="#333" stroke-width="1.1"/></svg>
<div class="a" style="left:1011px;top:534px;width:1px;height:24px;background:#c8c8c8"></div>
<div class="a" style="left:0px;top:707px;width:1366px;height:20px;background:#efebea"></div>
<div class="t " style="left:876px;top:713px;font-size:10.8px;color:#000;">ATmega8</div>
<div class="t " style="left:962px;top:713px;font-size:11.2px;color:#7a7a7a;">AVR Simulator</div>
<div class="t " style="left:1058px;top:713px;font-size:11.8px;color:#7a7a7a;">Auto</div>
<div class="a" style="left:1150px;top:710px;width:16px;height:16px;background:#c8c8c8"></div>
<svg class="a" style="left:1150px;top:710px;" width="16" height="16" viewBox="0 0 16 16"><circle cx="8" cy="8" r="6" fill="#7a7a7a"/></svg>
<div class="t " style="left:1186px;top:713px;font-size:10.9px;color:#000;">Ln 108, Col 1</div>
<div class="t " style="left:1281px;top:713px;font-size:11px;color:#7a7a7a;">CAP</div>
<div class="t " style="left:1307px;top:713px;font-size:11px;color:#000;">NUM</div>
<div class="t " style="left:1340px;top:713px;font-size:11px;color:#7a7a7a;">OVR</div>
<div class="a" style="left:1016px;top:706px;width:350px;height:1px;background:#8c8c8c"></div>
<div class="a" style="left:0px;top:729px;width:1366px;height:39px;background:linear-gradient(90deg,#8599b0 0px,#889db3 55px,#a5bdd6 85px,#b3cbe5 120px,#b4cce6 600px,#b1c9e3 735px,#a3bad2 770px,#8c9fb5 830px,#8599b0 950px,#8a9db3 1366px)"></div>
<div class="a" style="left:0px;top:729px;width:1366px;height:39px;background:linear-gradient(rgba(255,255,255,.18),rgba(255,255,255,.04) 45%,rgba(0,0,0,0) 100%)"></div>
<div class="a" style="left:0px;top:727px;width:1366px;height:1px;background:#ffffff"></div>
<div class="a" style="left:0px;top:728px;width:1366px;height:1px;background:#2c3844"></div>
<div class="a" style="left:0px;top:729px;width:1366px;height:1px;background:#c4d6e8"></div>
<svg class="a" style="left:7px;top:728px;" width="40" height="40" viewBox="0 0 40 40"><defs><linearGradient id="orbt" x1="0" y1="0" x2="0" y2="1"><stop offset="0" stop-color="#d6e2ec"/><stop offset="0.45" stop-color="#7f9ab4"/><stop offset="0.5" stop-color="#0c3f78"/><stop offset="0.8" stop-color="#0a70b8"/><stop offset="1" stop-color="#10d8f8"/></linearGradient></defs><circle cx="20" cy="20" r="18" fill="url(#orbt)" stroke="#0e3a6a" stroke-width="1.2"/><circle cx="20" cy="20" r="19" fill="none" stroke="#dde6ee" stroke-width="0.8" opacity=".7"/><path d="M10.5 12.5c3-2 6-2 8 -0.5l-1.8 7c-2.5-1.5-5.5-1.5-8 0.3Z" fill="#ee5a1c"/><path d="M20 12c3 1.8 6 1.8 9 0l-1.8 7.3c-3 1.8-6 1.8-9 0Z" fill="#8cc63e"/><path d="M8.5 20c3-1.8 6-1.8 8 0l-1.8 7c-2.5-1.5-5.5-1.5-8 0.3Z" fill="#30a0e8"/><path d="M18 20.5c3 1.8 6 1.8 9 0l-1.8 7c-3 1.8-6 1.8-9 0Z" fill="#fcc01e"/></svg>
<svg class="a" style="left:72px;top:734px;" width="34" height="30" viewBox="0 0 34 30"><path d="M2 4h10l2 2h16v19H2Z" fill="#f3dd8a" stroke="#c9a94e"/><rect x="5" y="2" width="6" height="5" fill="#fff"/><rect x="5" y="2" width="3" height="2" fill="#22b022"/><rect x="12" y="4" width="8" height="4" fill="#fff"/><rect x="12" y="4" width="3" height="2" fill="#dd2a2a"/><rect x="20" y="6" width="8" height="4" fill="#fff"/><rect x="21" y="6" width="3" height="2" fill="#2a7add"/><path d="M2 9h28v17H2Z" fill="#f7e6a4" stroke="#c9a94e"/><path d="M7 28V17h18v11h-4v-6H11v6Z" fill="#8fd0f0" stroke="#4a9ac8"/></svg>
<svg class="a" style="left:136px;top:732px;" width="30" height="30" viewBox="0 0 30 30"><circle cx="15" cy="15" r="14" fill="#e33b2e"/><path d="M15 15L27.1 8A14 14 0 0 1 15 29Z" fill="#fcd116"/><path d="M15 15L15 29A14 14 0 0 1 2.9 8Z" fill="#3ba54a"/><path d="M15 15L2.9 8A14 14 0 0 1 27.1 8Z" fill="#e33b2e"/><circle cx="15" cy="15" r="6.5" fill="#fff"/><circle cx="15" cy="15" r="5" fill="#3e7fd8"/></svg>
<svg class="a" style="left:197px;top:731px;" width="33" height="33" viewBox="0 0 33 33"><defs><radialGradient id="ffg" cx="60%" cy="35%" r="60%"><stop offset="0" stop-color="#6ec0f0"/><stop offset="0.6" stop-color="#2a68c0"/><stop offset="1" stop-color="#123a80"/></radialGradient><linearGradient id="ffo" x1="0" y1="0" x2="1" y2="1"><stop offset="0" stop-color="#f8a030"/><stop offset="0.5" stop-color="#e8601a"/><stop offset="1" stop-color="#b83a10"/></linearGradient></defs><circle cx="17" cy="15" r="13.5" fill="url(#ffg)"/><path d="M4 7C0.5 15 3 27 14 31C24 33.5 31.5 26 31.5 17C31.5 12 30 9 28.5 7C30 13 27 20 21 22C15 24 9 21 8.5 15C8.2 12 10 10 12.5 9.5C10 8 7.5 9 6.5 8.5C6 7 6.5 5 8 3.5C5.5 4 4.5 5.5 4 7Z" fill="url(#ffo)"/><path d="M26 22C28 18 28 12 26 8" fill="none" stroke="#fcc040" stroke-width="1.5" opacity=".7"/></svg>
<svg class="a" style="left:259px;top:735px;" width="32" height="25" viewBox="0 0 32 25"><rect width="32" height="25" fill="#ff0000"/><g fill="none" stroke="#fff" stroke-width="1.6" stroke-linejoin="miter"><path d="M2 21V14L4 3.8H9V19M3 12H9"/><path d="M11 19V3.8H15.5V10.5H11.8M14 11L16.5 19"/><path d="M24 3.8H18V19H24M18 11H23"/><path d="M30.5 3.8H26V11H30.5V19H25.5"/><path d="M1.5 21.2H30.5" stroke-width="1.4"/></g></svg>
<div class="a" style="left:307px;top:729px;width:55px;height:39px;background:linear-gradient(rgba(255,255,255,.45),rgba(255,255,255,.15));border:1px solid rgba(60,80,100,.55);border-radius:3px;box-shadow:inset 0 0 0 1px rgba(255,255,255,.45)"></div>
<div class="a" style="left:362px;top:731px;width:4px;height:37px;border:1px solid rgba(60,80,100,.5);border-left:none;border-radius:0 3px 3px 0"></div>
<svg class="a" style="left:318px;top:735px;" width="33" height="25" viewBox="0 0 33 25"><rect width="33" height="25" fill="#0000ff"/><g fill="none" stroke="#fff" stroke-width="1.6"><path d="M3 8.5V19"/><path d="M12.5 8.5H5.5V13.5H12V19H4.5"/><path d="M17.5 8.5V19"/><path d="M30 8.5H20V13.5H29.5V19H19.5"/></g><rect x="2.2" y="4" width="1.8" height="2" fill="#fff"/><rect x="16.7" y="4" width="1.8" height="2" fill="#fff"/></svg>
<svg class="a" style="left:383px;top:732px;" width="32" height="32" viewBox="0 0 32 32"><defs><linearGradient id="atg" x1="0" y1="0" x2="0" y2="1"><stop offset="0" stop-color="#4a90d8"/><stop offset="0.6" stop-color="#1a58a8"/><stop offset="1" stop-color="#0a3070"/></linearGradient></defs><circle cx="15.5" cy="15.5" r="6.2" fill="none" stroke="url(#atg)" stroke-width="3.6"/><path d="M21.7 10V18C21.7 21.5 26.5 22 28 17.5C30 10 24.5 2.5 15.5 2.5C8 2.5 2.5 8.5 2.5 16C2.5 24 8.5 29.5 16 29.5C19.5 29.5 22 28.5 24 27" fill="none" stroke="url(#atg)" stroke-width="3.8"/></svg>
<svg class="a" style="left:445px;top:733px;" width="33" height="32" viewBox="0 0 33 32"><defs><linearGradient id="sg" x1="0" y1="0" x2="0" y2="1"><stop offset="0" stop-color="#8ec0ea"/><stop offset="1" stop-color="#2a6aa8"/></linearGradient></defs><path d="M3 1H24L32 16L24 31H3Z" fill="url(#sg)"/><path d="M8 12h4l6-5v18l-6-5H8Z" fill="#fff"/><path d="M21 11C24 14 24 18 21 21M24 8C28 12 28 20 24 24" fill="none" stroke="#fff" stroke-width="2"/></svg>
<div class="a" style="left:493px;top:729px;width:52px;height:39px;background:linear-gradient(rgba(255,255,255,.45),rgba(255,255,255,.15));border:1px solid rgba(60,80,100,.55);border-radius:3px;box-shadow:inset 0 0 0 1px rgba(255,255,255,.45)"></div>
<div class="a" style="left:545px;top:731px;width:4px;height:37px;border:1px solid rgba(60,80,100,.5);border-left:none;border-radius:0 3px 3px 0"></div>
<div class="a" style="left:549px;top:732px;width:3px;height:36px;border:1px solid rgba(60,80,100,.4);border-left:none;border-radius:0 3px 3px 0"></div>
<div class="a" style="left:503px;top:732px;width:32px;height:32px;background:#4a8af4;border-radius:4px"></div>
<svg class="a" style="left:503px;top:732px;" width="32" height="32" viewBox="0 0 32 32"><text x="8" y="24" font-family="Liberation Serif" font-size="30" fill="#fff">g</text></svg>
<svg class="a" style="left:568px;top:732px;" width="34" height="32" viewBox="0 0 34 32"><path d="M2 3C2 1.5 3 1 4 1H24L33 16L24 31H4C3 31 2 30.5 2 29Z" fill="#f2f2f2" stroke="#ccc"/><text x="8" y="26" font-family="Liberation Sans" font-weight="bold" font-size="23" fill="#f01018">Я</text></svg>
<div class="a" style="left:617px;top:729px;width:55px;height:39px;background:linear-gradient(rgba(255,255,255,.75),rgba(255,255,255,.45));border:1px solid rgba(60,80,100,.6);border-radius:3px"></div>
<div class="a" style="left:672px;top:731px;width:4px;height:37px;border:1px solid rgba(60,80,100,.5);border-left:none;border-radius:0 3px 3px 0"></div>
<svg class="a" style="left:629px;top:732px;" width="30" height="30" viewBox="0 0 30 30"><ellipse cx="16" cy="17" rx="6.5" ry="6" fill="#d81818" stroke="#000" stroke-width="1.2"/><circle cx="9" cy="14" r="3" fill="#000"/><path d="M9 11L6 2M11 11L12 6M3 13L7 14M4 20L10 18M5 26L11 21M14 28L15 23M22 27L20 22M26 20L22 18M26 12L22 14" stroke="#000" stroke-width="1.3"/><path d="M13 15l2 1M17 18l2-1M14 20l3 0" stroke="#000" stroke-width="0.8"/></svg>
<div class="a" style="left:680px;top:729px;width:59px;height:39px;background:linear-gradient(rgba(255,255,255,.45),rgba(255,255,255,.15));border:1px solid rgba(60,80,100,.55);border-radius:3px;box-shadow:inset 0 0 0 1px rgba(255,255,255,.45)"></div>
<svg class="a" style="left:693px;top:732px;" width="33" height="33" viewBox="0 0 33 33"><circle cx="15" cy="15" r="13" fill="#1ea7e8"/><circle cx="8" cy="8" r="6" fill="#1ea7e8"/><circle cx="22" cy="22" r="6" fill="#1ea7e8"/><text x="8" y="23" font-family="Liberation Sans" font-weight="bold" font-size="21" fill="#fff">S</text><circle cx="25" cy="26" r="6" fill="#f5a800" stroke="#fff" stroke-width="0.8"/><text x="22" y="30" font-family="Liberation Sans" font-weight="bold" font-size="9" fill="#000">2</text></svg>
<div class="a" style="left:804px;top:733px;width:58px;height:31px;background:linear-gradient(#2a2a2a,#000);border:1px solid #555;border-radius:4px"></div>
<div class="t " style="left:809px;top:741px;font-size:14px;color:#fff;letter-spacing:-0.3px">От сети</div>
<div class="t " style="left:920px;top:740px;font-size:11px;color:#f0f4f8;">EN</div>
<svg class="a" style="left:945px;top:736px;" width="10" height="17" viewBox="0 0 10 17"><rect x="2.5" y="1.5" width="6" height="3" fill="none" stroke="#fff"/><rect x="0.5" y="3.5" width="6" height="3" fill="#8599b0" stroke="#fff"/><path d="M1.5 12h7L5 15.5Z" fill="#fff"/></svg>
<svg class="a" style="left:963px;top:740px;" width="17" height="17" viewBox="0 0 17 17"><rect x="0.5" y="0.5" width="16" height="16" rx="2" fill="#e8621a" stroke="#a84008"/><path d="M5 11h7M4 13h9M8 3C6 5 10 6 8 9" stroke="#fff" stroke-width="1.3" fill="none"/></svg>
<svg class="a" style="left:987px;top:740px;" width="17" height="17" viewBox="0 0 17 17"><path d="M2 6h3l5-4v13l-5-4H2Z" fill="#f0f0f0" stroke="#333" stroke-width="0.6"/><path d="M12 5C14 7 14 10 12 12M14 3C17 6 17 11 14 14" fill="none" stroke="#fff" stroke-width="1.3"/></svg>
<svg class="a" style="left:1011px;top:740px;" width="17" height="17" viewBox="0 0 17 17"><path d="M4 2L8 5L4 8L0.5 5ZM12 2L16 5L12 8L8.5 5ZM4 9L8 12L4 15L0.5 12ZM12 9L16 12L12 15L8.5 12Z" fill="#fff" stroke="#444" stroke-width="0.8"/><circle cx="12" cy="12" r="4" fill="#2aa82a" stroke="#fff"/></svg>
<svg class="a" style="left:1035px;top:740px;" width="17" height="17" viewBox="0 0 17 17"><circle cx="8.5" cy="8.5" r="8" fill="#1a2a4a"/><circle cx="8.5" cy="8.5" r="5.5" fill="#6aa0e8" stroke="#2a4a8a"/></svg>
<svg class="a" style="left:1059px;top:740px;" width="17" height="17" viewBox="0 0 17 17"><rect x="1" y="1" width="15" height="15" fill="#fff"/><path d="M1 1h4v8l7-8h4l-7 8 7 7h-4l-7-7v7H1Z" fill="#e8102a"/><path d="M9 12l5 3h-4z" fill="#000"/></svg>
<svg class="a" style="left:1085px;top:739px;" width="13" height="18" viewBox="0 0 13 18"><circle cx="6.5" cy="5" r="4" fill="none" stroke="#666" stroke-width="1.5"/><rect x="1" y="7" width="11" height="10" rx="3" fill="#aaa" stroke="#555"/></svg>
<svg class="a" style="left:1108px;top:740px;" width="17" height="17" viewBox="0 0 17 17"><circle cx="8" cy="9" r="7.5" fill="#7cc04a"/><circle cx="10" cy="9" r="6" fill="#f7b500" stroke="#333" stroke-width="0.6"/><text x="7" y="13" font-family="Liberation Sans" font-size="9" font-weight="bold" fill="#000">2</text></svg>
<svg class="a" style="left:1131px;top:741px;" width="18" height="17" viewBox="0 0 18 17"><rect x="5" y="4" width="12" height="9" fill="#6a7a8a" stroke="#fff" stroke-width="1.2"/><path d="M8 15h6" stroke="#fff" stroke-width="1.5"/><path d="M2 2v6M4.5 2v6M1.5 8h4v2h-4z" stroke="#fff" stroke-width="1.2" fill="#fff"/></svg>
<svg class="a" style="left:1155px;top:740px;" width="18" height="18" viewBox="0 0 18 18"><path d="M4 5C1 8 1 12 4 15M6.5 7C5 9 5 11 6.5 13" fill="none" stroke="#c8c028" stroke-width="1.5"/><path d="M10 2v9M7 8l3 4 3-4" fill="none" stroke="#7a9a2a" stroke-width="2.4"/><path d="M8 2h4v2h-4z" fill="#fff"/></svg>
<svg class="a" style="left:1180px;top:740px;" width="16" height="17" viewBox="0 0 16 17"><rect x="1" y="3" width="9" height="12" fill="#fff" stroke="#333" stroke-width="0.9"/><rect x="5" y="5" width="10" height="7" rx="1" fill="#fff" stroke="#333" stroke-width="0.9"/><path d="M8 2v3M12 2v3M10 12v4" stroke="#333" stroke-width="1.2"/></svg>
<svg class="a" style="left:1203px;top:740px;" width="17" height="17" viewBox="0 0 17 17"><path d="M2 6h3l5-4v13l-5-4H2Z" fill="#e8602a" stroke="#7a2a0a" stroke-width="0.6"/><path d="M12 5C14 7 14 10 12 12M14 3C17 6 17 11 14 14" fill="none" stroke="#5a2a1a" stroke-width="1.2"/></svg>
<svg class="a" style="left:1228px;top:741px;" width="16" height="16" viewBox="0 0 16 16"><rect width="16" height="16" fill="#1a8ae0"/><circle cx="8" cy="6" r="1.5" fill="#fff"/><path d="M4 3C2 5 2 8 4 10M12 3C14 5 14 8 12 10" fill="none" stroke="#fff" stroke-width="1.3"/><path d="M6.5 8h3l1 7h-5z" fill="#fff"/></svg>
<svg class="a" style="left:1252px;top:740px;" width="17" height="17" viewBox="0 0 17 17"><path d="M2.5 1v15" stroke="#fff" stroke-width="1.6"/><path d="M3 2C6 1 8 4 11 3C13 3 14 3 15 4L13 7L15 9C12 10 10 8 7 9C5 9 4 9 3 9Z" fill="#f4f4f4" stroke="#555" stroke-width="0.6"/></svg>
<div class="t " style="left:1300px;top:734px;font-size:11.5px;color:#fff;">12:14</div>
<div class="t " style="left:1286px;top:750px;font-size:11.5px;color:#fff;">05.01.2015</div>
<div class="a" style="left:1352px;top:729px;width:14px;height:39px;background:linear-gradient(90deg,rgba(255,255,255,.35),rgba(255,255,255,.15));border:1px solid rgba(40,60,80,.5);border-right:none"></div>
</body></html>
